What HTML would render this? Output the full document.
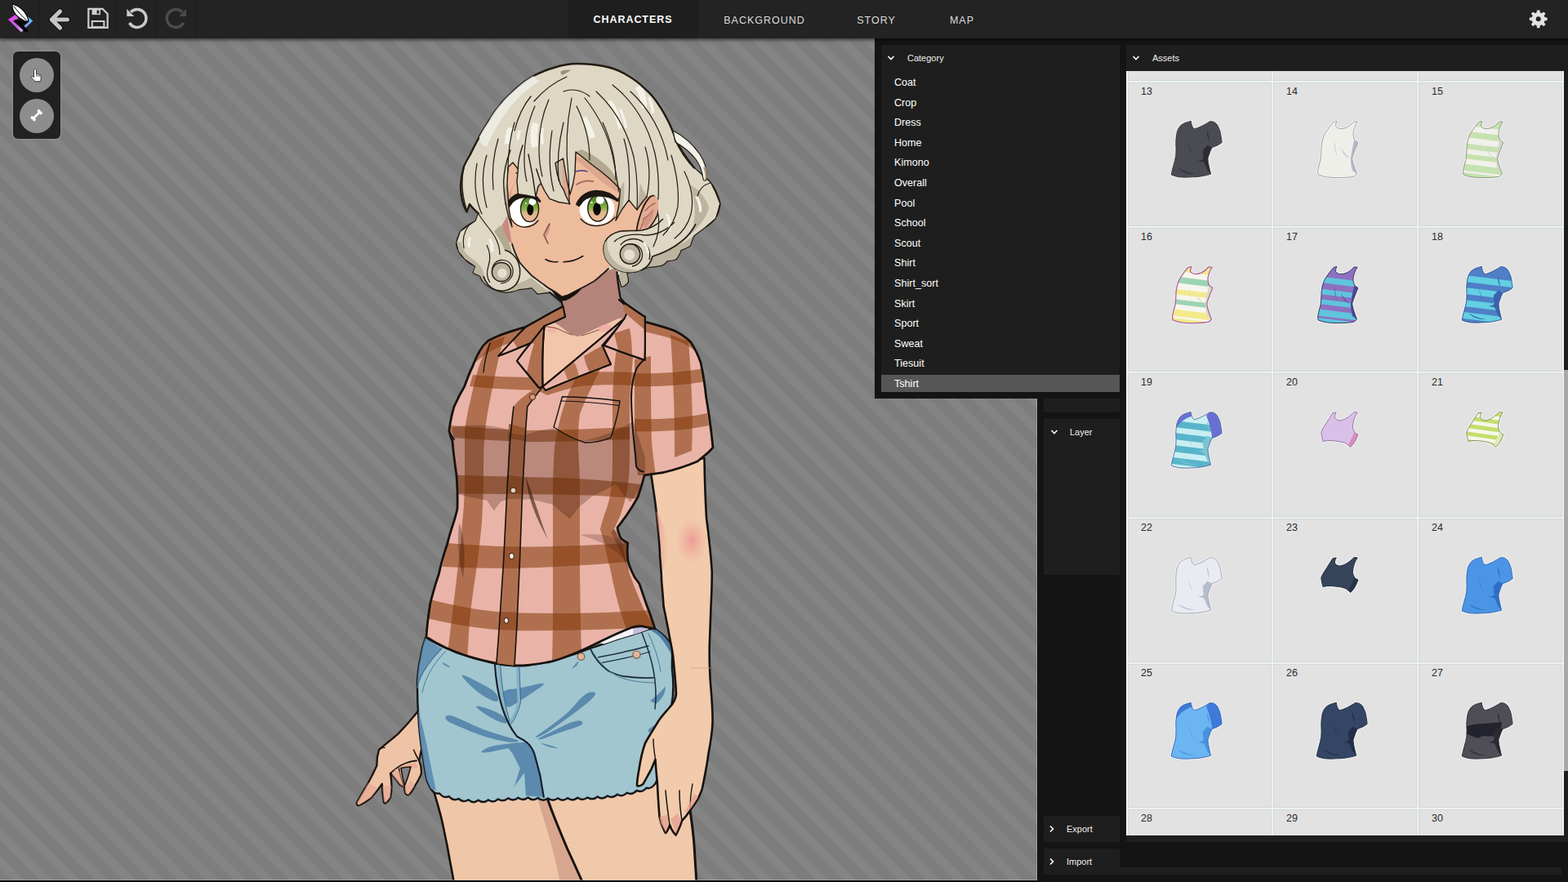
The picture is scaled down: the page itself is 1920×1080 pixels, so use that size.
<!DOCTYPE html>
<html lang="en">
<head>
<meta charset="utf-8">
<title>Character Editor</title>
<style>
*{box-sizing:border-box;margin:0;padding:0}
html,body{width:1920px;height:1080px;overflow:hidden;background:#141414;font-family:"Liberation Sans",sans-serif;color:#fff}
.abs{position:absolute}
#canvas{position:absolute;left:0;top:0;width:1270px;height:1080px;overflow:hidden;
 background:#828282 repeating-linear-gradient(45deg,#7d7d7d 0,#7d7d7d 11px,#848484 13px,#848484 22px,#7d7d7d 24px);}
#topbar{position:absolute;left:0;top:0;width:1920px;height:47px;background:#232323;box-shadow:0 2px 4px rgba(0,0,0,.55);z-index:20}
.tbtn{position:absolute;top:0;height:46px;width:48px;border-right:1px solid #1d1d1d}
.tab{position:absolute;top:0;height:47px;line-height:50.5px;text-align:center;font-size:12.5px;letter-spacing:1px;color:#dcdcdc;white-space:nowrap}
.tab.on{background:#1e1e1e;font-weight:bold;color:#fff;line-height:48px;letter-spacing:.95px}
#side{position:absolute;left:1270px;top:47px;width:650px;height:1033px;background:#141414}
.panel{position:absolute;background:#1e1e1e}
.ph{position:absolute;left:0;top:0;height:32px;line-height:32px;font-size:11px;color:#eee;white-space:nowrap}
.ph svg{position:absolute;top:11px}
.ph span{position:absolute;top:0}
#catwrap{position:absolute;left:1071px;top:47px;width:308px;height:441px;background:#141414;z-index:5}
.row{position:absolute;left:0;width:292px;height:21px;line-height:22.8px;font-size:12.6px;color:#fff;padding-left:16px;white-space:nowrap}
.row.sel{background:#565656}
#grid{position:absolute;left:1379px;top:87px;width:536px;height:936px;background:#eef1f1;overflow:hidden}
.cell{position:absolute;width:176px;height:176px;background:#e2e2e2;border:1px solid #d3d8d8}
.cell b{position:absolute;left:15px;top:2px;font-weight:normal;font-size:12.5px;color:#2a2a2a;line-height:16px}
.cell svg{position:absolute;left:0;top:0}
</style>
</head>
<body>
<div id="canvas">
<!--CHAR-START-->
<svg class="abs" style="left:0;top:0" width="1270" height="1080" viewBox="0 0 1270 1080">
<!-- back hair silhouette (behind everything) -->
<path id="hairsil" d="M707 78 C718 78 729 79 739 81 C749 83 758 86 766 91 C775 96 782 101 789 108 C796 114 802 121 807 129 C812 136 816 144 820 152 C823 159 826 166 828 172 C831 178 834 183 837 188 C841 194 846 200 852 208 C858 213 865 218 870 224 C875 230 879 240 881.5 249 C881 256 879 262 876 267 C872 272 867 276 862 279 C858 282 854 285 850 288 C847 293 846 298 844.8 301 C841 303 837 305 833.7 306 C832 311 830 314 828 317 C824 319 820 319 817 319 C815 322 812 324 809.6 324.8 C805 326 800 326.5 794.8 326.7 C791 328 787 329 783.7 330 C778 332 772 333 767 334 C768 338 769 342 768.9 345 C767 348 764 350 761.5 350.7 C760 346 758.5 342 757.8 337.8 L745 335 L690 372 L673 357.8 C668 358 663 359 658.5 359.6 C656 357 653 354 651 352 C646 353 641 353.5 636 354 C631 356 625 357.5 619.6 357.8 C614 357 609 356 604.8 354 C601 352 597 350 593.7 346.7 C591 344 589 341 588 337.4 C585 336.5 582 335 579.8 333.7 C581 331 582 328.5 582.6 326 C578 324 573 321 569.6 317 C566 314 563.5 311 562 307.8 C560 304 559 300 559.4 296.7 C560 292 562 288 564 283.7 C569 278 576 274 582.6 270.7 C584 267.5 585 264.5 586 261.5 C582 258 578 254.5 575 250 L571.5 259.6 C569 255 567 250 566 245 C564.5 239 564 232 564 226 C564.5 218 566 211 568 204 C570 199 573 194 576 189 C579 182 583 175 586.7 168 C590 161 595 154 599 147.5 C603 140 608 133 613.8 126.7 C619 120 626 114 632.5 108 C639 102 646 97 653 93 C661 89 669 85.5 678 83 C687 80 697 78 707 78 Z" fill="#ded7c4" stroke="#221c14" stroke-width="2.4" stroke-linejoin="round"/>
<!-- lower-back hair darker tufts -->
<path d="M757.8 337.8 C758.5 342 760 346 761.5 350.7 C764 350 767 348 768.9 345 C769 342 768 338 767 334 C772 333 778 332 783.7 330 C787 329 791 328 794.8 326.7 C800 326.5 805 326 809.6 324.8 C812 324 815 322 817 319 C820 319 824 319 828 317 C830 314 832 311 833.7 306 C837 305 841 303 844.8 301 C846 298 847 293 850 288 C840 296 828 302 815 306 C800 311 785 316 770 322 C764 326 760 332 757.8 337.8 Z" fill="#bcb49e"/>
<path d="M604.8 354 C609 356 614 357 619.6 357.8 C625 357.5 631 356 636 354 C641 353.5 646 353 651 352 C653 354 656 357 658.5 359.6 C663 359 668 358 673 357.8 C665 352 657 346 650 340 C640 346 625 351 604.8 354 Z" fill="#bcb49e"/>

<!-- ===== left hand (behind shorts) ===== -->
<g stroke="#1a1410" stroke-width="2.3" stroke-linejoin="round" stroke-linecap="round">
<path d="M514 868 C505 880 496 890 487.2 898.9 C479 906 471 912 463.9 918.3 C462 925 461.3 931 461.3 937.7 C458 945 454.5 952 450.9 958.5 C446 967 441 975 436.7 983.1 C437 985.5 438 986.5 439.3 986.3 C445 984 450 980.5 454.8 976.6 C459.5 971 464 965.5 467.8 959.8 C468 967 468.6 974 469.7 980.5 C470 983 470.8 984 471.6 983.8 C474.5 982 476.5 979.5 478.1 976.6 C479.3 971 479.6 965.5 479.4 959.8 C479.2 955 478.7 951 478.1 946.8 C482 951 486 956 489.8 961 L495 963.7 C495.3 966.5 495.8 969 496.3 971.4 C497.5 973 499 973.6 500.2 973.4 C503.5 970.5 506 966.5 507.9 962.4 C511 958 513.5 953 515.7 948.1 C516.5 942 515.5 936.5 513.1 931.3 L520 900 L520 868 Z" fill="#efc4a6"/>
<path d="M478.1 946.8 C484 941 491 936.5 498 934 C502.5 932.5 506.5 931.5 510 931.5" fill="none" stroke-width="1.8"/>
<path d="M506.6 918.3 C508.5 923 510.5 927 513.1 931.3" fill="none" stroke-width="1.6"/>
<path d="M495 963.7 C492 956 489.5 949 488.5 941" fill="none" stroke-width="1.6"/>
<path d="M463.9 918.3 C466 916 468.5 915 471 915.5" fill="none" stroke-width="1.4"/>
</g>
<path d="M450.9 958.5 L436.7 983.1 L439.3 986.3 L454.8 976.6 L463 965 Z M468.3 963 L469.7 980.5 L471.6 983.8 L478.1 976.6 L479.3 962 Z M480 949 L489.8 961 L495 963.7 L490 945 L484 941 Z M495.5 965 L496.3 971.4 L500.2 973.4 L507.9 962.4 L503 955 Z" fill="#e3a090" opacity=".55"/>
<path d="M489 940 C495 937 502 934.5 509 934 L512 940 C505 940 497 942 491 946 Z" fill="#e3a090" opacity=".6"/>
<path d="M491 940.5 C495 939.5 499 939 503 939 C501 947 498.5 955 495.6 962 C493.5 955 492 948 491 940.5 Z" fill="#808080" stroke="#1a1410" stroke-width="1.6" stroke-linejoin="round"/>

<!-- ===== legs ===== -->
<g stroke="#17120e" stroke-linejoin="round">
<path d="M530 965 C533 975 537 988 540 1000 C543 1012 545 1024 547.5 1035 C550 1050 553 1064 556 1082 L720 1082 L668 972 Z" fill="#efc6a8" stroke-width="2.6"/>
<path d="M657 974 L671 976 C675 988 679 1000 683 1010 C687 1021 691 1031 695 1040 C701 1053 707 1066 714 1082 L686 1082 C682 1060 677 1040 671 1020 C666 1003 661 988 657 974 Z" fill="#d8a68f" stroke="none"/>
<path d="M669 974 C673 986 678 999 682.5 1010 C687 1021 691 1031 695 1040 C701 1053 707 1066 714 1082 L853 1082 C852 1066 851 1050 850 1035 C849 1020 847 1006 845 992 L840 955 Z" fill="#f0c8aa" stroke-width="3"/>
</g>

<!-- ===== shorts ===== -->
<g stroke="#16181c" stroke-linejoin="round" stroke-linecap="round">
<path d="M521 781 C518 789 516 797 515 805 C512 817 511 829 511 840 C511 853 511.5 867 512.5 880 C513 892 514.5 904 516 915 C518 929 520 942 522.5 955 C524 959 526 963 527.5 966 Q532.8 973.2 538.1 971.4 Q543.8 978.2 549.7 975.1 Q555.6 981.5 561.5 978.0 Q567.5 983.5 573.6 979.3 Q579.7 984.7 585.7 979.8 Q591.8 984.4 597.9 979.5 Q604.0 983.8 610.1 978.4 Q616.1 982.6 622.2 977.3 Q628.3 981.9 634.4 976.8 Q640.4 981.3 646.5 976.5 Q652.6 981.6 658.7 977.0 Q664.8 982.1 670.9 977.4 Q677.0 982.2 683.1 977.4 Q689.2 982.2 695.2 977.2 Q701.3 981.8 707.4 976.8 Q713.5 981.4 719.6 976.4 Q725.7 980.7 731.7 975.5 Q737.8 979.8 743.9 974.5 Q749.9 978.4 755.9 972.7 Q761.9 976.5 768.0 970.7 Q773.9 974.2 779.8 967.9 Q785.7 971.3 791.5 964.7 Q797.0 966.8 802.5 959.4 L812 940 C818 915 821 890 822 865 C825 850 825 835 823 820 C822.5 808 824 798 822 790 C818 782 810 775 802 770 L794 770.5 C784 774.5 774 777.5 763 780.7 C755 783 747 786 739 788.6 C733 790.5 727 792.5 720.7 794.6 C700 803 672 811 645 815 C628 816 612 814 600 811 C575 806 548 796 521 781 Z" fill="#a1c6cf" stroke-width="2.4"/>
</g>
<!-- shorts shading -->
<g fill="#5b8aae">
<path d="M568.2 831.2 Q561.1 822.9 573.4 829.0 Q585.8 835.2 597.2 841.4 Q608.6 847.5 609.9 854.5 Q611.3 861.6 602.0 857.6 Q592.8 853.7 584.0 846.6 Q575.2 839.6 568.2 831.2 Z"/>
<path d="M615.4 857.2 Q612.5 844.9 623.8 844.0 Q635.0 843.1 653.5 838.7 Q672.0 834.3 663.2 840.5 Q654.4 846.6 645.1 852.8 Q635.9 858.9 627.1 864.2 Q618.3 869.5 615.4 857.2 Z"/>
<path d="M589.7 871.3 Q577.8 862.5 588.0 865.1 Q598.1 867.7 607.7 872.1 Q617.4 876.5 620.1 882.3 Q622.7 888.0 612.1 884.0 Q601.6 880.1 589.7 871.3 Z"/>
<path d="M545.7 880.2 Q544.4 877.4 547.5 876.1 Q550.6 874.8 558.5 878.3 Q566.4 881.8 579.6 888.0 Q592.8 894.1 608.6 898.8 Q624.5 903.5 631.5 905.6 Q638.5 907.7 631.5 908.6 Q624.5 909.4 608.6 905.9 Q592.8 902.4 577.8 896.3 Q562.9 890.1 555.0 886.6 Q547.0 883.1 545.7 880.2 Z"/>
<path d="M592.3 921.6 Q586.6 921.4 592.3 917.9 Q598.1 914.4 608.6 912.6 Q619.2 910.9 632.4 909.5 Q645.6 908.2 647.5 910.4 Q649.4 912.6 634.3 914.6 Q619.2 916.5 608.6 919.1 Q598.1 921.8 592.3 921.6 Z"/>
<path d="M657.0 902.9 Q652.6 903.8 663.2 896.8 Q673.7 889.7 686.0 880.1 Q698.4 870.4 705.4 861.6 Q712.4 852.8 717.7 849.7 Q723.0 846.6 727.0 847.5 Q730.9 848.4 727.8 852.3 Q724.8 856.3 716.0 863.3 Q707.2 870.4 694.0 880.1 Q680.8 889.7 671.1 895.9 Q661.4 902.1 657.0 902.9 Z"/>
<path d="M659.7 905.6 Q656.1 905.6 666.7 900.3 Q677.3 895.0 687.8 889.7 Q698.4 884.5 704.5 883.1 Q710.7 881.8 712.9 884.0 Q715.1 886.2 710.2 888.4 Q705.4 890.6 693.1 894.6 Q680.8 898.5 672.0 902.1 Q663.2 905.6 659.7 905.6 Z"/>
<path d="M665.8 912.0 Q659.7 908.7 666.7 910.7 Q673.7 912.6 679.9 914.8 Q686.0 917.0 679.0 916.1 Q672.0 915.3 665.8 912.0 Z"/>
<path d="M703.2 817.2 Q699.2 819.4 701.9 816.3 Q704.5 813.2 706.7 811.0 Q708.9 808.8 708.0 811.9 Q707.2 815.0 703.2 817.2 Z"/>
<path d="M542.6 813.2 Q540.0 810.6 543.5 811.9 Q547.0 813.2 549.7 815.4 Q552.3 817.6 548.8 816.7 Q545.3 815.8 542.6 813.2 Z"/>
<path d="M619.2 912.6 L649.1 910.9 L654.4 923.2 L661.4 949.6 L665.8 976.0 L643.8 974.2 L642.1 946.0 L635.9 954.8 L629.7 963.6 L636.8 940.8 L628.0 923.2 Z"/>
<path d="M521 781 C518 789 516 797 515 805 C512 817 511 829 511 840 C513 832 517 824 522 817 C528 808 534 801 541 794 C534 790 527 786 521 781 Z" opacity=".85"/>
<path d="M512.5 880 C513 892 514.5 904 516 915 C518 929 520 942 522.5 955 L527.5 966 L534 968 C530 950 526 930 522 910 C519 895 516 884 512.5 870 Z" opacity=".9"/>
<path d="M796 858 C803 853 810 847 815 840 C815 848 811 856 803 862 Z"/>
<path d="M794 893 C802 888 810 882 816 876 L814 886 C808 891 801 895 794 897 Z"/>
</g>
<g fill="none" stroke-linecap="round" stroke-linejoin="round">
<path d="M610.7 815.8 Q612.5 852.8 622.7 882.7" stroke="#86b2c6" stroke-width="3.6"/>
<path d="M633.6 814.1 L635.4 859.8 Q631.5 875.7 624.8 884.8" stroke="#86b2c6" stroke-width="3.6"/>
<path d="M612.9 815.8 Q614.7 852.8 624.2 883.7" stroke="#3d6a8c" stroke-width="1"/>
<path d="M635.8 814.1 L637.6 859.8 Q633.5 876.7 625.8 886.3" stroke="#3d6a8c" stroke-width="1"/>
<path d="M606.0 814.1 C608.6 852.8 617.4 882.7 633.3 902.1 C641.0 906.0 649.1 909.1 654.4 923.2 L661.4 949.6 L665.8 976.0" stroke="#16202c" stroke-width="2.2"/>
</g>
<g fill="none" stroke="#1b2a3c" stroke-width="1.3" stroke-linecap="round">
<path d="M541 794 C534 801 528 808 522 817 C517 824 513 832 511 842" stroke="#4d7798"/>
<path d="M546 797 C539 804 533 812 528 820 C523 828 519 838 517 848" stroke="#4d7798" stroke-width="1"/>
<path d="M723.5 795.6 C728 806 736 815 744.8 821.5 C752 825 758 827 763 828 C776 830 788 830.5 800 829.8" stroke="#1d2d3d" stroke-width="1.8"/><path d="M727 800 C734 812 745 822 758 829 C772 834 786 836 801 836" stroke="#4d7798" stroke-width="1"/>
<path d="M732.8 804.8 C753 801 774 796.5 793.9 791" stroke="#1d2d3d" stroke-width="1.5"/>
<path d="M737.4 811.3 C756 808 776 804 796 798" stroke="#1d2d3d" stroke-width="1.3"/>
<path d="M786 775 C792 790 797 805 800 820 C803 836 804 852 802 868" stroke="#1d2d3d" stroke-width="1.5"/>
<path d="M794 776 C801 790 806 806 809 822" stroke="#4d7798" stroke-width="1"/>
</g>
<!-- rivets & underwear -->
<path d="M739 788.6 C747 786 755 783 763 780.7 C774 777.5 784 774.5 794 770.5 L790 760 L770 764 L745 776 L728 786 Z" fill="#f4f4f6"/><path d="M775 777 C781 775.5 787 773.5 794 770.5 L790 762 L776 766 Z" fill="#c6bedc"/><path d="M802 770.5 C810 775 817 782 821 790 C822 794 822.5 798 822 802 C819 795 814 787 808 780 C804 776 800 773.5 796 771.5 Z" fill="#4f7ba0"/>
<circle cx="711.5" cy="804" r="4.3" fill="#dfb79a" stroke="#7a5a48" stroke-width="1.2"/>
<circle cx="779.5" cy="801.6" r="4.6" fill="#dfb79a" stroke="#7a5a48" stroke-width="1.2"/>

<!-- ===== right arm & hand ===== -->
<g stroke="#17120e" stroke-linejoin="round" stroke-linecap="round">
<path d="M796 572 C798 585 800 600 802 613 C804 628 805 640 806 650 C807 662 808 670 808 680 C809 692 810 700 810 710 C811 722 812 732 812.5 742 C814.5 752 816.5 762 818.5 772 C820 782 822.5 792 824 802 C825.5 818 827.5 835 828 850 C827 857 824 862 820 866 C815 872 809 878 805 885 C800 893 795 901 790 910 C786 921 784 932 782.5 942 C781 950 780 956 780 962 C782 963 785 962 787.5 960 C791 954 794 948 797.5 942 L802.5 930 C803 940 804 950 805 960 C805.5 973 806.5 987 807.5 1000 C809 1008 812 1015 815 1020 C817 1018 819 1014 820 1010 C822 1016 825 1020 827.5 1022.5 C830 1018 833 1012 835 1005 C838 1002 842 997 845 992.5 C848 988 852 983 855 977.5 C857 973 859 969 860 965 C863 950 866 936 867.5 922.5 C870 910 872 897 872.5 885 C873 870 871 850 869.5 830 L869 817 C868.6 806 868.6 798 868.8 789 C869.2 775 870 760 870.5 744 C871.2 730 871.8 715 871.8 700 C870.5 680 868 657 865 634 C863.6 610 862.8 585 862.5 561 Z" fill="#f1cbab" stroke-width="2.6"/>
<path d="M820 1010 C818 996 816 982 815 968" fill="none" stroke-width="1.5"/>
<path d="M835 1005 C833 992 832 980 832 968" fill="none" stroke-width="1.5"/>
<path d="M845 992 C845 980 846 970 848 960" fill="none" stroke-width="1.3"/>
<path d="M802.5 930 C801 920 800 912 800 905" fill="none" stroke-width="1.4"/>
</g>
<!-- arm shading -->
<defs>
<radialGradient id="blush1" cx=".5" cy=".5" r=".5"><stop offset="0" stop-color="#ee8088" stop-opacity=".62"/><stop offset="1" stop-color="#ee8f92" stop-opacity="0"/></radialGradient>
<linearGradient id="blush2" x1="0" y1="0" x2="1" y2="0"><stop offset="0" stop-color="#ea8c8c" stop-opacity=".6"/><stop offset="1" stop-color="#ea8c8c" stop-opacity="0"/></linearGradient>
<linearGradient id="armg" x1="0" y1="0" x2="1" y2="0"><stop offset="0" stop-color="#f6d9bd" stop-opacity=".55"/><stop offset=".5" stop-color="#f6d9bd" stop-opacity="0"/></linearGradient>
</defs>
<path d="M800 590 C802 604 803 616 804.5 630 C806 644 807 656 808 668 C809 682 810 696 811 710 C812 722 812.5 732 813 742 L830 742 L826 590 Z" fill="url(#blush2)" opacity=".0"/>
<path d="M803 625 C805 640 807 654 808.5 668 C809.5 680 810 690 810.5 700 C816 690 819 676 817 662 C815 648 810 636 803 625 Z" fill="url(#blush2)"/>
<ellipse cx="847" cy="662" rx="19" ry="28" fill="url(#blush1)"/>
<path d="M807.5 1000 L809 1008 L815 1019 L819 1010 L817 998 Z M821 1003 L827.5 1021 L834 1005 L830 996 Z M838 996 L846 990 L855 976 L850 972 Z" fill="#e59e90" opacity=".75"/>
<path d="M870 817 L846 817 L846 818.5 L870 818.5 Z" fill="#c9a08a" opacity=".5"/>

<!-- ===== shirt ===== -->
<defs>
<clipPath id="shirtclip"><path id="shirtpath" d="M689.6 375.4 C680 380 671 385 662.5 390 C656 394 650 397 643.8 400.4 C634 403 625 406 616.7 408.8 C610 411 604 414 598 417 C593 421 590 425 587.5 429.6 C584 436 581 442 579 448 C575 456 572 464 568.8 473 C564 481 560 489 556 498 C553 508 551 518 550 527.5 C551 532 552 536 554 540 C555 554 557 568 559 581.7 C560 596 560.5 610 560 623 C559 628 557.5 633 556 638 C553 647 550 656 548 665 C544 677 540 690 537.5 702.5 C533 715 530 727 527 738 C525 750 523 765 522 780 C536 789 552 797 570 802.5 C584 807 597 810 610 812.5 L630 815 C644 815 657 813.5 670 811 C677 810 689 806 700 801.5 C712 797 722 792 731 787.5 C745 780.5 759 774 772.6 768.7 C778 767 783 766.5 786.5 766.9 L802 770 C799 760 795.5 750 791.5 740 C788.5 731 785 721 783 715 C781 712 779 709.5 777 706.7 C773 699 770 692 768.8 685.8 C768 678 768 671 768.8 665 C765 663 762 661 760 658.8 C758 654 756.5 650 756 646 C760 641 763.5 636 766.7 631.7 C772 624 777 616 781 608.8 C784 600 787 591 789 582 C797 580.5 805 579.5 812.5 578.5 C827 575 841 570.5 854 565 C859 561 864 557 868.8 552.5 L873 548 C871 527 868 506 864.6 485.8 C863 471 861 457 858 444 C855 435 851 427 845.8 419 C840 413 833 408.5 825 404.6 C813 400 801 397 789.6 394 L789.6 388 C783 384 777 379.5 770.8 375.4 C766 372 762 369.5 758 367 C740 372 715 376 689.6 375.4 Z"/></clipPath>
</defs>
<path d="M689.6 375.4 C680 380 671 385 662.5 390 C656 394 650 397 643.8 400.4 C634 403 625 406 616.7 408.8 C610 411 604 414 598 417 C593 421 590 425 587.5 429.6 C584 436 581 442 579 448 C575 456 572 464 568.8 473 C564 481 560 489 556 498 C553 508 551 518 550 527.5 C551 532 552 536 554 540 C555 554 557 568 559 581.7 C560 596 560.5 610 560 623 C559 628 557.5 633 556 638 C553 647 550 656 548 665 C544 677 540 690 537.5 702.5 C533 715 530 727 527 738 C525 750 523 765 522 780 C536 789 552 797 570 802.5 C584 807 597 810 610 812.5 L630 815 C644 815 657 813.5 670 811 C677 810 689 806 700 801.5 C712 797 722 792 731 787.5 C745 780.5 759 774 772.6 768.7 C778 767 783 766.5 786.5 766.9 L802 770 C799 760 795.5 750 791.5 740 C788.5 731 785 721 783 715 C781 712 779 709.5 777 706.7 C773 699 770 692 768.8 685.8 C768 678 768 671 768.8 665 C765 663 762 661 760 658.8 C758 654 756.5 650 756 646 C760 641 763.5 636 766.7 631.7 C772 624 777 616 781 608.8 C784 600 787 591 789 582 C797 580.5 805 579.5 812.5 578.5 C827 575 841 570.5 854 565 C859 561 864 557 868.8 552.5 L873 548 C871 527 868 506 864.6 485.8 C863 471 861 457 858 444 C855 435 851 427 845.8 419 C840 413 833 408.5 825 404.6 C813 400 801 397 789.6 394 L789.6 388 C783 384 777 379.5 770.8 375.4 C766 372 762 369.5 758 367 C740 372 715 376 689.6 375.4 Z" fill="#e9b4a7"/>
<g clip-path="url(#shirtclip)">
<g fill="#813809" fill-opacity=".55">
<!-- vertical bands -->
<path d="M600 418 L618 412 C612 430 608 450 604 470 C600 490 596 508 594 527 C592 545 592 565 592 585 C592 605 591 622 590 640 C588 660 586 680 583 700 C580 720 577 740 575 760 L572 810 L548 800 L553 760 C555 740 558 720 560 700 C563 680 565 660 566 640 C568 622 569 605 569 585 L569 527 C571 512 574 498 577 486 C580 472 583 460 586 450 C590 438 595 427 600 418 Z"/>
<path d="M719 436 L741 440 C735 452 730 462 725 473 C719 485 714 496 710 507 C708 520 708 534 708 548 C709 566 710 583 710 600 L710 700 L711 765 L712 805 L676 814 L677 765 L677 600 C677 582 678 565 679 548 C681 533 684 520 687.5 507 C691 495 695 484 700 473 C706 460 712 448 719 436 Z"/>
<path d="M760 398 L779 404 C777 420 775 435 774 450 C772 467 771 484 771 500 L771 560 C771 575 770 588 768 600 C766 611 763 621 760 630 L752 648 C755 654 758 660 762 665 C764 677 767 689 770 700 C776 717 783 734 790 750 L804 770 L772 784 C768 773 764 762 760 750 C755 733 751 716 748 700 C745 688 742 676 740 665 L735 648 C737 640 739 632 742 625 C745 617 747 608 748 600 C750 587 750 574 750 560 L750 500 C750 483 751 466 752 450 C754 432 757 414 760 398 Z"/>
<!-- horizontal bands torso -->
<path d="M579 459 C600 461 630 462 655 462 L664 473 L673 469 C690 463 700 459 708 457 C730 455 755 455 777 456 L777 472 C755 471 732 471 708 473 C695 476 682 480 670 484 L658 478 C630 477 600 476 575 473 Z"/>
<path d="M551 521 C580 523 615 526 646 527 C690 527 730 525 771 523 L771 538 C730 540 690 541 646 541 C615 540 583 538 556 536 Z"/>
<path d="M559 581.7 C600 583 640 584 680 585 C715 586 750 589 785 593 L780 611 C748 607 715 606 680 605.5 C640 605 600 605 560 604.6 Z"/>
<path d="M548 665 C575 667 600 669 625 669.5 C670 670 720 668 769 665 L769.5 688 C720 692 670 695 625 696 C597 696 568 695 541.5 694 Z"/>
<path d="M527 734 C556 742 590 748 620 750 C680 752 740 751 797 747 L803 768 C745 771 680 773 620 772 C588 770 555 765 523 757 Z"/>
<!-- shoulders -->
<path d="M689 375 L662 390 L643.8 400.4 L617 409 L598 417 L588 429 L580 446 C592 434 606 426 622 421 C636 416 650 410 662 402 C672 394 682 385 692 378 Z"/>
<path d="M789.6 388 L789.6 394 L825 404.6 L845.8 419 L852 430 C842 422 830 417 817 413 C807 410 797 408 789.6 406 Z"/>
<!-- sleeve bands -->
<path d="M821 410 L843 418 C845 440 846 462 847 484 C848 506 848 528 847 552 L826 560 C826 536 826 512 825 488 C824 462 823 436 821 410 Z"/>
<path d="M777 440 L797 436 C797 470 797 505 798 540 C799 555 801 568 803 582 L781 582 C779 568 778 554 777 540 Z"/>
<path d="M777 457 C805 458 835 456 862 451 L864.5 467 C836 472 806 474 777 473 Z"/>
<path d="M777 513 C808 514 838 512 866 506 L868 521 C840 527 808 529 777 528 Z"/>
</g>

</g>
<path d="M689.6 375.4 C680 380 671 385 662.5 390 C656 394 650 397 643.8 400.4 C634 403 625 406 616.7 408.8 C610 411 604 414 598 417 C593 421 590 425 587.5 429.6 C584 436 581 442 579 448 C575 456 572 464 568.8 473 C564 481 560 489 556 498 C553 508 551 518 550 527.5 C551 532 552 536 554 540 C555 554 557 568 559 581.7 C560 596 560.5 610 560 623 C559 628 557.5 633 556 638 C553 647 550 656 548 665 C544 677 540 690 537.5 702.5 C533 715 530 727 527 738 C525 750 523 765 522 780 C536 789 552 797 570 802.5 C584 807 597 810 610 812.5 L630 815 C644 815 657 813.5 670 811 C677 810 689 806 700 801.5 C712 797 722 792 731 787.5 C745 780.5 759 774 772.6 768.7 C778 767 783 766.5 786.5 766.9 L802 770 C799 760 795.5 750 791.5 740 C788.5 731 785 721 783 715 C781 712 779 709.5 777 706.7 C773 699 770 692 768.8 685.8 C768 678 768 671 768.8 665 C765 663 762 661 760 658.8 C758 654 756.5 650 756 646 C760 641 763.5 636 766.7 631.7 C772 624 777 616 781 608.8 C784 600 787 591 789 582 C797 580.5 805 579.5 812.5 578.5 C827 575 841 570.5 854 565 C859 561 864 557 868.8 552.5 L873 548 C871 527 868 506 864.6 485.8 C863 471 861 457 858 444 C855 435 851 427 845.8 419 C840 413 833 408.5 825 404.6 C813 400 801 397 789.6 394 L789.6 388 C783 384 777 379.5 770.8 375.4 C766 372 762 369.5 758 367 C740 372 715 376 689.6 375.4 Z" fill="none" stroke="#17120e" stroke-width="2.8" stroke-linejoin="round"/>

<!-- shirt shading & details (inside clip) -->
<g clip-path="url(#shirtclip)">
<path d="M548 530 L555.6 523 C570 520 584 520 596 521 C606 522 616 524 624 526.4 L645 531.7 C656 528 667 526 677 524.7 C690 530 701 536 712 540.5 C724 538 736 534 747 530 C757 526 767 521 775.5 516 L790 560 L790 585 C785 596 779 606 772 615 C767 610 760 602 754 593 C745 598 735 603 726 607 C720 612 714 617 708.6 621 C705 626 701 631 698 635.5 C691 630 684 624 677 618 C668 615 658 613 649 611 L640 612 L624 611 C620 612 617 613 613.7 614 C610 618 607 622 605 625.6 C602 621 599 617 596 612.6 C587 611 577 609 568 607 L555 604 Z" fill="#3a1608" opacity=".27"/>
<path d="M562.5 640 C560 655 561 672 563 688 C564 697 566 703 567 708 C569 694 569 680 568 666 C567 656 565 648 562.5 640 Z" fill="#3a1608" opacity=".35"/>
<path d="M643.8 583.8 C650 600 656 618 662 636 C665 645 668 653 671 661 C664 648 657 634 652 620 C648 608 645 596 643.8 583.8 Z" fill="#2a1006" opacity=".55"/>
<path d="M710 655 C730 652 750 656 768 665 L769 690 C755 672 735 662 710 655 Z" fill="#3a1608" opacity=".22"/>
<path d="M752 648 C760 654 766 660 769 668 L770 700 C764 684 757 668 748 652 Z" fill="#3a1608" opacity=".3"/>
<!-- placket -->
<path d="M660 473 L664.6 473.3 C658 482 651 490 645.8 498 C644 520 642.5 543 641.7 565 L639.6 602.5 L636.5 685.8 L633 765 L630 818 L607 815 L611.5 765 L616.7 685.8 L620.8 602.5 L623 565 C624 542 626 520 629 498 C636 488 648 480 660 473 Z" fill="#b07050"/>
<path d="M623 519 L643 524 L642 540 L622 537 Z M620.8 582 L640 584 L639.6 605 L620 604.5 Z M617.5 669 L637 669.5 L636 696 L616.5 696 Z M613 749 L633.5 750 L632.5 772 L611.5 771 Z" fill="#8e4a22" opacity=".75"/>
<path d="M622.5 530 L642.5 533 L639.6 611 L620.8 611 Z" fill="#3a1608" opacity=".25"/>
</g>
<g fill="none" stroke="#17120e" stroke-width="1.6" stroke-linecap="round" stroke-linejoin="round">
<path d="M664.6 473.3 C658 482 651 490 645.8 498 C644 520 642.5 543 641.7 565 L639.6 602.5 L636.5 685.8 L633 765 L630 815"/>
<path d="M629 498 C626 520 624 542 623 565 L620.8 602.5 L616.7 685.8 L611.5 765 L608 812"/>
<!-- pocket -->
<path d="M688.5 485.8 C712 486 736 488 759 491 C757 506 753 521 748 535.8 C738 540 727 542 716.7 542 C703 538 690 531 678 523 C682 510 685 498 688.5 485.8 Z" stroke-width="1.4"/>
<path d="M687 491 C710 491.5 734 493.5 757.5 496.5" stroke-width="1.2"/>
<!-- armhole seam / sleeve -->
<path d="M787 442 C783 446 780 449 779 452.5 C775 463 773 474 773 486 C773 500 774 514 775 527.5 C776 538 777 548 778 556.7 L779 571 C781 575 784 577 787.5 577.5" stroke-width="2"/>
<path d="M600 420 C596 432 593 444 592 456" stroke-width="1.3"/>
<path d="M556 538 C553 534 551 530 550 527.5" stroke-width="2"/>
</g>
<!-- buttons -->
<g stroke="#5a3a24" stroke-width="1.3">
<circle cx="652" cy="486" r="3.6" fill="#d89a72"/>
<circle cx="628.5" cy="600.4" r="3.4" fill="#e4d0bc"/>
<ellipse cx="626.5" cy="681" rx="2.9" ry="3.6" fill="#f6f3f0"/>
<ellipse cx="620" cy="759.8" rx="2.6" ry="3.4" fill="#f6f3f0"/>
</g>

<!-- neck & chest skin -->
<path d="M684 352 L692 388 L666 398 L664.6 473.3 L764.6 390 L770 378 L759.6 364.6 L754 328 Z" fill="#f3c6ab"/>
<path d="M684 352 L692 388 L668 397 C672 396 676 395 680 395.5 C686 399 692 404 698 408.8 C701 410.5 705 411.5 708 412 C715 409 722 406 729 402.5 C738 398.5 748 394.5 757 390 L765 389.5 L770 378 L759.6 364.6 L754 328 Z" fill="#b4847b"/>
<ellipse cx="741" cy="402" rx="9" ry="5" fill="#ec9c9c" opacity=".5"/>
<ellipse cx="676" cy="404" rx="6" ry="4" fill="#ec9c9c" opacity=".35"/>
<g fill="none" stroke="#17120e" stroke-linecap="round" stroke-linejoin="round">
<path d="M686.7 364.6 C688 372 690 380 692 388" stroke-width="2.2"/>
<path d="M755.4 333 C756 344 758 355 759.6 364.6 C763 369 767 373 770 377" stroke-width="2.2"/>
<path d="M667 400 C673 400 679 401 684 403 C690 406 696 409 701 410" stroke-width="1" stroke="#7a4a3c"/>
<path d="M712 411 C720 409 727 406 733 404" stroke-width="1" stroke="#7a4a3c"/>
</g>

<!-- collars & lapels -->
<g stroke="#17120e" stroke-width="2" stroke-linejoin="round">
<!-- left collar -->
<path d="M689.6 375.4 C680 380 671 385 662.5 390 L643.8 400.4 C632 412 621 424 610.4 435.8 C624 431 637 425 650 420 C656 413 661 406 666.7 399 C675 396 684 392 692 388 Z" fill="#b07050"/>
<path d="M628 417 L610.4 435.8 L634 427 Z" fill="#e9b4a7" stroke="none"/>
<!-- left lapel -->
<path d="M666.7 399 C661 406 656 413 650 420 C644 427 638 435 633 442 C642 453 651 464 660 475 L664.6 473.3 C664 448 664 423 666.7 399 Z" fill="#b07050"/>
<path d="M650 420 L633 442 L645 456 C648 444 650 432 654 421 Z" fill="#e9b4a7" stroke="none"/>
<!-- right lapel -->
<path d="M764.6 390 C731 418 698 446 664.6 473.3 L668 478 C695 466 722 456 748 446 C744 438 741 430 737.5 423 C747 412 756 401 764.6 390 Z" fill="#e9b4a7"/>
<path d="M737.5 423 L748 446 L722 456 C718 448 716 442 715 436 Z" fill="#b07050" stroke="none"/>
<path d="M690 452 L702 442 C706 448 708 455 709 462 L696 467 Z" fill="#b07050" stroke="none" opacity=".9"/>
<!-- right collar -->
<path d="M758 367 C762 369.5 766 372 770.8 375.4 C777 379.5 783 384 789.6 388 C790 406 790 424 789.6 441 C772 435 755 429 739.6 423 C748 412 757 401 764.6 390 L770 378 Z" fill="#e9b4a7"/>
<path d="M765 371 L789.6 388 L789.6 404 C780 396 771 388 763 381 Z" fill="#b07050" stroke="none"/>
<path d="M752 408 L771 402 C773 412 774 424 774 435 L757 429 Z" fill="#b07050" stroke="none"/>
</g>
<g fill="none" stroke="#17120e" stroke-width="2" stroke-linejoin="round" stroke-linecap="round">
<path d="M689.6 375.4 C680 380 671 385 662.5 390 L643.8 400.4 C632 412 621 424 610.4 435.8 C624 431 637 425 650 420 C644 427 638 435 633 442 C642 453 651 464 660 475"/>
<path d="M666.7 399 C664 423 664 448 664.6 473.3 C698 446 731 418 764.6 390"/>
<path d="M668 478 C695 466 722 456 748 446 C744 438 741 430 737.5 423 L739.6 423 C755 429 772 435 789.6 441 C790 424 790 406 789.6 388 C783 384 777 379.5 770.8 375.4 C766 372 762 369.5 758 367"/>
</g>

<!-- ===== face ===== -->
<path d="M621 241 L616 200 L640 160 L760 150 L800 200 L808 250 L797 284 L778 300 L760 318 L745 329 C740 334 734 339 728 344 C721 348 714 352 707.5 355 L696 361 L688 363.5 L680.7 358 C675 355 670 352 666 348.5 C661 345 656 341 651 337.4 C646 332 640 326 636 320.7 C632 313 629 306 627 298.5 C625 291 624 284 623 276 Z" fill="#edbc9d"/>
<!-- hair shadow on forehead/face -->
<path d="M621 241 L640 205 L700 190 L780 215 L792 255 L770 245 L757 236 L740 225 L722 210 L706 196 L700 222 L697 246 L686 236 L676 228 L666 222 L655 236 L646 228 L634 216 L627 232 L624 262 Z" fill="#d79f8a" opacity=".75"/>
<!-- ear -->
<path d="M779 290 C779 282 781 272 784 263 C787 254 791 246 796 241 C800 238 805 239 807 244 C808 250 807 257 805 263 C802 270 798 276 793 281 C789 285 784 288 779 290 Z" fill="#e1ab92" stroke="#221c14" stroke-width="1.8"/>
<path d="M788 268 C792 266 796 262 799 258 M790 258 C794 254 798 250 802 249 M784 281 C786 277 788 273 788 268" fill="none" stroke="#a8665a" stroke-width="1.5" stroke-linecap="round"/>
<path d="M786 272 C790 268 796 262 800 255 C802 262 797 272 790 279 Z" fill="#c98a7c" opacity=".7"/>
<!-- chin line & shadow -->
<path d="M627 298.5 C629 306 632 313 636 320.7 C640 326 646 332 651 337.4 C656 341 661 345 666 348.5 C670 352 675 355 680.7 358 L688 363.5 L696 361 L707.5 355 C714 352 721 348 728 344 C734 339 740 334 745 329" fill="none" stroke="#221c14" stroke-width="1.8" stroke-linecap="round"/>
<path d="M674 353 C679 357 684 361 688 363.5 L696 361 C702 358 708 355 713 352 C710 357 704 362 697 366 C693 368.5 689 369 686 368 C681 364 677 359 674 353 Z" fill="#17120e"/>
<g transform="translate(0 -1)"><!-- eyes whites -->
<ellipse cx="642" cy="258.3" rx="17.6" ry="19.6" fill="#fff"/>
<ellipse cx="731" cy="257" rx="21.5" ry="19.6" fill="#fff"/>
<!-- iris -->
<defs>
<linearGradient id="irisg" x1="0" y1="0" x2="0" y2="1"><stop offset="0" stop-color="#3f6f22"/><stop offset=".18" stop-color="#5c9030"/><stop offset=".5" stop-color="#8ab548"/><stop offset=".64" stop-color="#dcb78a"/><stop offset="1" stop-color="#f4b8a4"/></linearGradient>
</defs>
<ellipse cx="648.6" cy="257" rx="11" ry="15.6" fill="url(#irisg)" stroke="#2a2a18" stroke-width="1.5"/>
<ellipse cx="732" cy="256" rx="12.2" ry="16" fill="url(#irisg)" stroke="#2a2a18" stroke-width="1.5"/>
<ellipse cx="649.3" cy="257.7" rx="4" ry="7" fill="#0c0a08"/>
<ellipse cx="731" cy="257" rx="4.8" ry="7.8" fill="#0c0a08"/>
<circle cx="652" cy="248" r="4.4" fill="#fff"/>
<circle cx="734.8" cy="246" r="5" fill="#fff"/>
<circle cx="644" cy="250" r="1.1" fill="#e8f4d0"/>
<circle cx="724.5" cy="249" r="1.2" fill="#e8f4d0"/>
</g>
<!-- lashes -->
<g fill="none" stroke="#1c1612" stroke-linecap="round">
<path d="M621.5 252 C624 244 632 238 642 237.4 C651 237.2 657 241 661 247.5 C656 243.5 650 241.6 643 241.8 C634 242.2 627 246 623.5 253 Z" fill="#241812" stroke-width="2.8" stroke-linejoin="round" transform="translate(0 -1)"/>
<path d="M706.5 251 C711 241 720 235.6 730 235.2 C741 235.2 750 239.5 756.5 246.5 C749 242 741 239.8 731 240 C721 240.4 713 245 709 252.5 Z" fill="#241812" stroke-width="2.8" stroke-linejoin="round" transform="translate(0 -1)"/>
<path d="M755 246 C757 244 759 241 760 238" stroke-width="1.6"/>
<path d="M626 268 C630 275 637 278.5 644 278 C651 277.5 656 274 659 270" stroke-width="1.3"/>
<path d="M711 268 C716 274 724 277 732 276.5 C741 276 748 272 753 266" stroke-width="1.3"/>
<path d="M623 251 L619 249 M624 247 L621 243" stroke-width="1.3"/>
<!-- brows -->
<path d="M705 210 C710 208.5 715 208.5 719 210" stroke="#5a4a8a" stroke-width="1.6"/>
<path d="M632 212 C636 210.5 640 210.5 644 211.5" stroke="#3a3028" stroke-width="1.4"/>
<path d="M706 226 C712 222 720 221 726 222" stroke="#a86a62" stroke-width="2"/>
<!-- nose & mouth -->
<path d="M673 274 C670 279 668 283.5 666 287.5 C667.5 291 669.5 295 671 298" stroke="#7a4a3a" stroke-width="1.5"/>
<path d="M668 317.5 C672 320 677 321.2 683 320.5" stroke-width="1.5"/>
<path d="M690 320.8 C699 320.5 707 318 713.8 313.5" stroke-width="1.5"/>
</g>
<path d="M666 287.5 C669 283 672 278 673.5 274 C674 280 672 286 668.5 290 Z" fill="#c98d78" opacity=".8"/>
<!-- inner ear/shadow at left of face -->
<path d="M604.8 283.7 C608 280 611 277.5 614 276 C617 281 619.5 286 621.5 291 C623.5 297 625 303 627 309.6 C629 313.5 631 317 632.6 320.7 L623 320.7 C618 317 614 313.5 610 309.6 C608 306 606 302 604.8 298.5 Z" fill="#b3a991"/>
<path d="M614.5 276 C617 283 619.5 289 623 296 L627 298.5 L623 276 L621.5 264 Z" fill="#c98a80"/>
<!-- bangs -->
<path d="M612 200 L616 225 L619 240 L621.5 255 L627 278 L623 255 L621 225 L622 205 L628 199 L634.4 207 L633 222 L634.4 237 L645 238.5 L656 241 L659 228 L662.5 224.6 L667 234 L672.9 243.3 L684 247.5 L697.9 249.6 L693 240 L690 232 L686.5 226.7 L682 212 L680 199.6 L689.6 194 L692 208 L694 220 L698 238 L701.5 226 L704 212 L705 186 L714 193 L725 201.7 L736 210 L745.8 218.3 L753 225 L759.4 231.9 L758 250 L754 270 L762 256 L770 245 L780 257 L786 248 L792 241 L800 238 L808 246 L822 200 L780 140 L640 140 Z" fill="#ded7c4"/>
<!-- underside shadow shapes in bangs -->
<path d="M705 186 L714 193 L725 201.7 L736 210 L745.8 218.3 L753 225 L759.4 231.9 C757 222 752 213 745 205 C736 196 724 188 712 183 Z" fill="#b3a98f"/>
<path d="M759.4 231.9 L758 250 L754 270 L762 256 C764 245 765 234 764 222 C762 226 760 229 759.4 231.9 Z" fill="#bcb49e"/>
<path d="M780 257 L786 248 L792 241 C789 236 786 230 784 224 C783 235 782 246 780 257 Z" fill="#bcb49e"/>
<path d="M621 225 L623 255 L627 278 C622 262 619 246 618 232 C618.5 229 619.5 227 621 225 Z" fill="#bcb49e"/>
<path d="M680 199.6 L682 212 L686.5 226.7 L690 232 C689 222 688 212 689.6 194 Z" fill="#c9c2ad" opacity=".9"/>
<g fill="none" stroke="#221c14" stroke-width="1.4" stroke-linejoin="round" stroke-linecap="round">
<path d="M625 184 C620 197 617 210 616.7 222.5 C617 240 619 258 627 278 L623 255 L621 225 L622 205 L628 199 L634.4 207 L633 222 L634.4 237"/>
<path d="M647 189 C651 207 654 225 656 241 L659 228 L662.5 224.6 L667 234 L672.9 243.3 L684 247.5 L697.9 249.6 L693 240 L690 232 L686.5 226.7 L682 212 L680 199.6 L689.6 194 L692 208 L694 220 L698 238 L701.5 226 L704 212 L705 186 L714 193 L725 201.7 L736 210 L745.8 218.3 L753 225 L759.4 231.9 L758 250 L754 270 L762 256 L770 245 L780 257 L786 248 L792 241"/>
<path d="M656.8 207 C659 214 661 220 662.5 224.6"/>
<path d="M640 178 C636 190 634 200 634.4 207"/>
</g>
<!-- right side hair over/around ear & swoop into curl -->
<path d="M806 244 C812 236 816 226 818 214 L850 206 L870 224 L881 249 L876 267 L862 279 L850 288 C838 296 826 301 812 305 C806 290 804 276 806 262 Z" fill="#ded7c4"/>
<path d="M845 226 C856 232 864 242 868 254 C866 262 862 270 856 276 C852 281 848 285 844 288 C850 276 852 262 850 248 C849 240 847 233 845 226 Z" fill="#bcb49e"/>
<!-- right curl -->
<path d="M815 263 C808 272 798 279 786 282 C778 283 768 282 760 283 C751 285 744 289 741 296 C738 303 739 311 742 317 C746 324 752 329 760 332 C768 334 777 334 785 331 C792 328 797 322 799 314 C812 310 824 304 834 296 C842 290 848 282 852 274 Z" fill="#ded7c4"/>
<path d="M812 268 C806 274 797 280 786 282 C778 283 768 282 760 283 C751 285 744 289 741 296 C738 303 739 311 742 317 C746 324 752 329 760 332 C768 334 777 334 785 331 C792 328 797 322 799 314 C812 310 824 304 834 296 C842 290 848 282 852 274" fill="none" stroke="#221c14" stroke-width="1.7" stroke-linejoin="round"/>
<path d="M741 296 C738 303 739 311 742 317 C746 324 752 329 760 332 C768 334 777 334 785 331 C778 331 770 330 763 327 C755 323 749 317 746 310 C744 305 743 300 744 295 Z" fill="#bcb49e"/>
<circle cx="771.5" cy="311" r="12.2" fill="#bcb49e" stroke="#221c14" stroke-width="1.5"/>
<circle cx="770.7" cy="312" r="6.6" fill="#e4dfcf"/>
<path d="M771.5 298.8 C779 298 786 303 786.5 311 C787 318 782 325 774 326" fill="none" stroke="#221c14" stroke-width="1.3"/>
<path d="M760 300 C766 292 778 290 787 296 C794 301 797 309 795 318" fill="none" stroke="#221c14" stroke-width="1.3"/>
<path d="M752 296 C760 288 775 286 790 288 C803 288 816 282 826 272" fill="none" stroke="#221c14" stroke-width="1.3"/>
<!-- left wave + curl -->
<path d="M586 261.5 C590 268 596 274 602 280 C608 287 614 296 618 306 C625 308 632 314 635 322 C638 331 637 341 632 348 C626 355 616 358 607 355 C599 352 594 345 592 338 L588 337.4 L579.8 333.7 L582.6 326 L569.6 317 L562 307.8 L559.4 296.7 L564 283.7 L582.6 270.7 Z" fill="#ded7c4"/>
<path d="M564 296 C566 304 570 311 577 316 C584 321 590 326 592 334 C593 340 596 347 602 352 C596 350 591 345 588 337.4 L579.8 333.7 L582.6 326 L569.6 317 L562 307.8 L559.4 296.7 Z" fill="#bcb49e"/>
<circle cx="614" cy="333" r="11.6" fill="#bcb49e" stroke="#221c14" stroke-width="1.5"/>
<circle cx="615" cy="334.6" r="5.8" fill="#e4dfcf"/>
<path d="M618 306 C625 308 632 314 635 322 C638 331 637 341 632 348 C626 355 616 358 607 355 C599 352 594 345 592 338" fill="none" stroke="#221c14" stroke-width="1.6"/>
<path d="M602.5 331 C603 323 609 318 616 318.5 C624 319 629 326 628 334 C627 341 621 347 613 347" fill="none" stroke="#221c14" stroke-width="1.2"/>
<path d="M596 300 C600 308 601 317 598 326 C596 332 596 340 600 346" fill="none" stroke="#221c14" stroke-width="1.2"/>
<path d="M586 262 C592 272 600 280 606 290 C610 297 612 304 612 312" fill="none" stroke="#221c14" stroke-width="1.2"/>
<path d="M586.7 168 C590 161 595 154 599 147.5 C603 140 608 133 613.8 126.7 C619 120 626 114 632.5 108 C639 102 646 97 653 93 L660 100 C653 104 646 109 640 115 C633 121 627 128 622 135 C616 142 611 150 607 158 C603 165 599 172 596 180 L589 176 Z" fill="#efeee6" opacity=".85"/>
<!-- highlights -->
<g fill="#f4f2e8">
<path d="M787 108 C790 114 792 121 792 129 L789 131 C788 123 786 115 783 109 Z"/>
<path d="M796 118 C799 124 801 131 801 138 L798 139 C797 132 795 125 793 120 Z"/>
<path d="M748 128 C752 136 756 145 758 155 L762 154 C760 144 756 135 752 127 Z"/>
<path d="M758 134 C761 141 764 149 765 157 L768 156 C767 148 764 140 761 133 Z"/>
<path d="M716 147 C719 153 722 160 724 167 L728 166 C726 159 723 152 720 146 Z"/>
<path d="M653 152 C651 160 651 168 653 177 L658 176 C657 168 657 160 659 153 Z"/>
<path d="M662 156 C661 163 661 170 663 177 L666 176 C665 170 665 163 666 157 Z"/>
<path d="M624 158 C622 163 621 168 621 173 L626 172 C626 167 627 162 629 158 Z"/>
<path d="M634 160 C633 164 633 168 633 172 L636 171 C636 167 637 163 638 160 Z"/>
<path d="M854 240 C858 246 860 253 859 260 L856 259 C856 252 854 246 851 241 Z"/>
<path d="M818 262 C822 268 823 276 821 283 L818 282 C819 275 818 268 815 263 Z"/>
<path d="M601 292 C604 297 605 303 604 309 L601 308 C601 302 600 297 598 293 Z"/>
<path d="M574 290 C572 294 572 299 573 303 L576 302 C575 298 576 294 577 291 Z"/>
<path d="M789 296 C793 300 795 305 795 311 L792 310 C792 305 790 300 787 297 Z"/>
</g>
<path d="M824 160 C836 166 848 176 857 189 C863 198 866 208 865.5 219 C864 222 862 222 861 219 C860 210 857 202 852 195 C845 186 836 179 827 174 Z" fill="#f4f2e8" stroke="#221c14" stroke-width="1.2" stroke-linejoin="round"/>
<path d="M861 205 C863 210 864 215 863 220 L865.5 219 C866 214 865.5 209 864 204 Z" fill="#a89a80"/>
<path d="M783 104 C788 112 791 121 792 131 L786 133 C785 124 782 115 778 108 Z" fill="#f4f2e8"/>
<path d="M744 124 C750 134 755 146 757 158 L763 156 C760 144 755 133 749 123 Z" fill="#f4f2e8"/>
<path d="M652 150 C649 160 649 171 651 181 L659 179 C657 170 657 160 660 152 Z" fill="#f4f2e8"/>
<path d="M712 144 C716 152 720 161 722 170 L729 168 C726 159 722 150 718 143 Z" fill="#f4f2e8"/>
<path d="M622 156 C619 163 618 170 618 177 L626 175 C626 168 627 162 630 157 Z" fill="#f4f2e8"/>
<!-- crown mark -->
<path d="M686 88 C690 85.5 695 85 699 86 C696 88 692 90.5 688 92 Z" fill="#9a917c"/>
<!-- strand lines -->
<g fill="none" stroke="#221c14" stroke-width="1.2" stroke-linecap="round">
<path d="M694 94 C680 100 666 110 654 124"/>
<path d="M690 112 C700 108 712 110 722 118"/>
<path d="M650 118 C640 130 634 144 630 160"/>
<path d="M672 122 C664 140 660 160 660 182 C660 196 662 208 664 216"/>
<path d="M655 130 C646 150 642 172 642 196 C642 206 643 214 645 222"/>
<path d="M630 150 C624 170 622 190 622 210"/>
<path d="M610 170 C604 190 602 210 604 232"/>
<path d="M596 190 C590 210 590 232 596 254"/>
<path d="M700 120 C694 150 692 180 696 214 C697 228 697 240 697 250"/>
<path d="M690 150 C684 175 682 200 684 221"/>
<path d="M676 160 C672 185 672 210 678 234"/>
<path d="M706 130 C716 150 722 172 722 196"/>
<path d="M716 120 C732 140 744 164 750 190 C753 205 756 220 757.5 234"/>
<path d="M730 112 C752 132 768 160 776 192 C780 212 781 235 780 257"/>
<path d="M750 104 C776 124 794 154 802 188 C806 206 807 224 806 244"/>
<path d="M772 112 C796 134 812 164 818 196"/>
<path d="M738 150 C748 172 754 196 754 220"/>
<path d="M764 170 C770 190 772 212 770 245"/>
<path d="M790 180 C796 200 796 222 792 241"/>
<path d="M826 170 C832 184 840 196 850 206"/>
<path d="M822 190 C828 210 832 230 830 252 C828 266 822 278 812 288"/>
<path d="M838 210 C846 226 850 244 846 262 C843 274 836 284 826 292"/>

<path d="M870 224 C862 226 856 232 854 240"/>
<path d="M806 262 C808 276 806 290 800 302"/>
<path d="M568 204 C564 222 566 242 572 259" stroke-width="1.6"/>
<path d="M584 200 C580 222 582 244 590 262"/>
<path d="M574 276 C568 284 566 294 568 304"/>
</g>


</svg>
<!--CHAR-END-->
<!-- toolbox -->
<div class="abs" style="left:16px;top:63px;width:58px;height:107px;background:#212121;border-radius:6px;box-shadow:0 0 0 1px rgba(160,160,160,.55)"></div>
<div class="abs" style="left:24px;top:71px;width:42px;height:42px;border-radius:50%;background:#8d8d8d"></div>
<div class="abs" style="left:24px;top:121px;width:42px;height:42px;border-radius:50%;background:#8d8d8d"></div>

<svg class="abs" style="left:16px;top:63px" width="58" height="107" viewBox="16 63 58 107">
<!-- hand pointer -->
<g transform="translate(-1.8 0.6) translate(45 92) scale(.95) translate(-45 -92)"><path d="M43.2 85.2 C43.2 84.2 44 83.6 44.8 83.6 C45.7 83.6 46.4 84.3 46.4 85.2 L46.4 90 C46.8 89.4 48.2 89.4 48.5 90.4 C49 89.8 50.3 90 50.5 91 C51.2 90.6 52.3 91 52.3 92.2 L52.3 96 C52.3 97.6 51.6 98.6 51.3 99.6 L44.6 99.6 C43.8 98.2 42 96.6 40.6 95 C39.6 93.8 40.8 92.4 42 93.2 L43.2 94.2 Z" fill="#fff" stroke="#2b2b2b" stroke-width="1" stroke-linejoin="round"/>
<path d="M46.4 90 L46.4 93.4 M48.5 90.6 L48.5 93.4 M50.5 91.2 L50.5 93.4" stroke="#2b2b2b" stroke-width=".8" fill="none"/></g>
<!-- bone -->
<g transform="translate(-.3 -.3) rotate(-45 45 141.5) translate(45 141.5) scale(.88) translate(-45 -141.5)">
<rect x="38.5" y="140" width="13" height="3" fill="#fff"/>
<circle cx="38.5" cy="139.6" r="2.2" fill="#fff"/><circle cx="38.5" cy="143.4" r="2.2" fill="#fff"/>
<circle cx="51.5" cy="139.6" r="2.2" fill="#fff"/><circle cx="51.5" cy="143.4" r="2.2" fill="#fff"/>
</g>
</svg>

<div class="abs" style="left:0;top:1077px;width:1270px;height:1px;background:rgba(200,200,200,.45)"></div>
<div class="abs" style="left:0;top:1078px;width:1270px;height:2px;background:#0c0c0c"></div>
<div class="abs" style="left:1269px;top:47px;width:1px;height:1031px;background:rgba(190,190,190,.5)"></div>
</div>

<div id="side"></div>

<!-- side panels -->
<div class="panel" style="left:1278px;top:488px;width:93px;height:17px"></div>
<div class="panel" style="left:1278px;top:513px;width:93px;height:191px">
  <div class="ph"><svg style="left:8px" width="10" height="10" viewBox="0 0 10 10"><path d="M1.5 3 L5 6.5 L8.5 3" fill="none" stroke="#fff" stroke-width="1.6"/></svg><span style="left:32px">Layer</span></div>
</div>
<div class="panel" style="left:1278px;top:999px;width:93px;height:32px">
  <div class="ph"><svg style="left:5px" width="10" height="10" viewBox="0 0 10 10"><path d="M3 1.5 L6.5 5 L3 8.5" fill="none" stroke="#fff" stroke-width="1.6"/></svg><span style="left:28px">Export</span></div>
</div>
<div class="panel" style="left:1278px;top:1039px;width:93px;height:32px">
  <div class="ph"><svg style="left:5px" width="10" height="10" viewBox="0 0 10 10"><path d="M3 1.5 L6.5 5 L3 8.5" fill="none" stroke="#fff" stroke-width="1.6"/></svg><span style="left:28px">Import</span></div>
</div>
<div class="panel" style="left:1278px;top:1062px;width:634px;height:9px"></div>

<!-- category -->
<div id="catwrap">
 <div class="panel" style="left:8px;top:8px;width:292px;height:425px">
  <div class="ph"><svg style="left:7px" width="10" height="10" viewBox="0 0 10 10"><path d="M1.5 3 L5 6.5 L8.5 3" fill="none" stroke="#fff" stroke-width="1.6"/></svg><span style="left:32px">Category</span></div>
  <div class="row" style="top:35px">Coat</div>
  <div class="row" style="top:59.6px">Crop</div>
  <div class="row" style="top:84.2px">Dress</div>
  <div class="row" style="top:108.8px">Home</div>
  <div class="row" style="top:133.4px">Kimono</div>
  <div class="row" style="top:158px">Overall</div>
  <div class="row" style="top:182.6px">Pool</div>
  <div class="row" style="top:207.2px">School</div>
  <div class="row" style="top:231.8px">Scout</div>
  <div class="row" style="top:256.4px">Shirt</div>
  <div class="row" style="top:281px">Shirt_sort</div>
  <div class="row" style="top:305.6px">Skirt</div>
  <div class="row" style="top:330.2px">Sport</div>
  <div class="row" style="top:354.8px">Sweat</div>
  <div class="row" style="top:379.4px">Tiesuit</div>
  <div class="row sel" style="top:404px">Tshirt</div>
 </div>
</div>

<!-- assets -->
<div class="panel" style="left:1379px;top:55px;width:541px;height:976px">
  <div class="ph"><svg style="left:7px" width="10" height="10" viewBox="0 0 10 10"><path d="M1.5 3 L5 6.5 L8.5 3" fill="none" stroke="#fff" stroke-width="1.6"/></svg><span style="left:32px">Assets</span></div>
</div>
<div id="grid">
<div class="cell" style="left:2px;top:-164px"></div>
<div class="cell" style="left:180px;top:-164px"></div>
<div class="cell" style="left:358px;top:-164px"></div>
<div class="cell" style="left:2px;top:14px"><b>13</b><svg width="176" height="176" viewBox="0 0 176 176"><defs><clipPath id="c1"><path d="M76.3 46.3 C76.5 49 77.5 53.5 80 55.6 C83 55.8 92 51.5 99.3 46.7 C102 46.5 104 47 105.2 47.8 C108 49.5 109.5 52 110.4 54.8 C112 58 112.7 61 113 64.4 C113.6 67.5 114 70 114.1 72.6 C112 74 110.5 75.3 108.1 76.3 C106 77.2 104 78 102.2 78.5 C100.5 81.5 99.3 84.5 98.5 87.4 C97.6 89.5 97 91.5 97 93.3 C97.2 96.5 97.8 99.5 98.5 102.2 C99.1 105.5 99.9 108.5 100.7 111.1 C98 112.2 95 112.9 91.9 113.3 C87 114.4 82 114.8 77 114.8 C72 115.3 67 115.3 62.2 114.8 C58.5 114.2 55 113.2 52.2 111.9 C52.8 108 53.8 104.5 54.8 100.7 C56 96.5 57.2 92.5 57.8 88.1 C58.2 83 58 78 57.8 73.3 C57.8 68 58.5 63 59.6 58.5 C60.7 55.5 62.3 53 64.4 51.1 C66.5 49.5 69 48.5 71.1 47.8 C73 47.2 74.8 46.6 76.3 46.3 Z"/></clipPath></defs><path d="M76.3 46.3 C76.5 49 77.5 53.5 80 55.6 C83 55.8 92 51.5 99.3 46.7 C102 46.5 104 47 105.2 47.8 C108 49.5 109.5 52 110.4 54.8 C112 58 112.7 61 113 64.4 C113.6 67.5 114 70 114.1 72.6 C112 74 110.5 75.3 108.1 76.3 C106 77.2 104 78 102.2 78.5 C100.5 81.5 99.3 84.5 98.5 87.4 C97.6 89.5 97 91.5 97 93.3 C97.2 96.5 97.8 99.5 98.5 102.2 C99.1 105.5 99.9 108.5 100.7 111.1 C98 112.2 95 112.9 91.9 113.3 C87 114.4 82 114.8 77 114.8 C72 115.3 67 115.3 62.2 114.8 C58.5 114.2 55 113.2 52.2 111.9 C52.8 108 53.8 104.5 54.8 100.7 C56 96.5 57.2 92.5 57.8 88.1 C58.2 83 58 78 57.8 73.3 C57.8 68 58.5 63 59.6 58.5 C60.7 55.5 62.3 53 64.4 51.1 C66.5 49.5 69 48.5 71.1 47.8 C73 47.2 74.8 46.6 76.3 46.3 Z" fill="none" stroke="#f1f1f1" stroke-width="3" stroke-linejoin="round"/><path d="M76.3 46.3 C76.5 49 77.5 53.5 80 55.6 C83 55.8 92 51.5 99.3 46.7 C102 46.5 104 47 105.2 47.8 C108 49.5 109.5 52 110.4 54.8 C112 58 112.7 61 113 64.4 C113.6 67.5 114 70 114.1 72.6 C112 74 110.5 75.3 108.1 76.3 C106 77.2 104 78 102.2 78.5 C100.5 81.5 99.3 84.5 98.5 87.4 C97.6 89.5 97 91.5 97 93.3 C97.2 96.5 97.8 99.5 98.5 102.2 C99.1 105.5 99.9 108.5 100.7 111.1 C98 112.2 95 112.9 91.9 113.3 C87 114.4 82 114.8 77 114.8 C72 115.3 67 115.3 62.2 114.8 C58.5 114.2 55 113.2 52.2 111.9 C52.8 108 53.8 104.5 54.8 100.7 C56 96.5 57.2 92.5 57.8 88.1 C58.2 83 58 78 57.8 73.3 C57.8 68 58.5 63 59.6 58.5 C60.7 55.5 62.3 53 64.4 51.1 C66.5 49.5 69 48.5 71.1 47.8 C73 47.2 74.8 46.6 76.3 46.3 Z" fill="#4a4b53"/><g clip-path="url(#c1)"><path d="M102.2 78.5 C100.5 81.5 99.3 84.5 98.5 87.4 C97.6 89.5 97 91.5 97 93.3 C97.2 96.5 97.8 99.5 98.5 102.2 L100.7 111.1 L96.5 106.5 C94.5 102 93.5 98.5 91.9 96.3 L84.4 94.8 C88 94.5 90.5 93.5 91.9 91.9 C91 87 90.5 83.5 91.1 81.5 C93.5 79.5 95.5 77 96.3 75.6 Z" fill="#2c2d34"/><path d="M72.6 71.1 C74 77 76 83 78.5 88.9 C75.8 84 73.6 78 72.6 71.1 Z" fill="#2c2d34"/><path d="M60.7 103.7 C67 107.5 74 110 81.5 111.1 C73 111.3 65 108.5 60.7 103.7 Z" fill="#2c2d34"/><path d="M96 58 C97.5 62 98.5 66 99 72 C97 67 95.5 62 96 58 Z" fill="#2c2d34"/></g><path d="M76.3 46.3 C76.5 49 77.5 53.5 80 55.6 C83 55.8 92 51.5 99.3 46.7 C102 46.5 104 47 105.2 47.8 C108 49.5 109.5 52 110.4 54.8 C112 58 112.7 61 113 64.4 C113.6 67.5 114 70 114.1 72.6 C112 74 110.5 75.3 108.1 76.3 C106 77.2 104 78 102.2 78.5 C100.5 81.5 99.3 84.5 98.5 87.4 C97.6 89.5 97 91.5 97 93.3 C97.2 96.5 97.8 99.5 98.5 102.2 C99.1 105.5 99.9 108.5 100.7 111.1 C98 112.2 95 112.9 91.9 113.3 C87 114.4 82 114.8 77 114.8 C72 115.3 67 115.3 62.2 114.8 C58.5 114.2 55 113.2 52.2 111.9 C52.8 108 53.8 104.5 54.8 100.7 C56 96.5 57.2 92.5 57.8 88.1 C58.2 83 58 78 57.8 73.3 C57.8 68 58.5 63 59.6 58.5 C60.7 55.5 62.3 53 64.4 51.1 C66.5 49.5 69 48.5 71.1 47.8 C73 47.2 74.8 46.6 76.3 46.3 Z" fill="none" stroke="#34353c" stroke-width="0.9" stroke-linejoin="round"/></svg></div>
<div class="cell" style="left:180px;top:14px"><b>14</b><svg width="176" height="176" viewBox="0 0 176 176"><defs><clipPath id="c2"><path d="M72.6 47.8 C74 46.9 75.5 46.4 77 46.3 C76 48.5 75.4 50.5 75.6 52.6 C77 54.5 79 55.4 81.5 55.6 C84 55.6 86.5 55.1 88.9 54.1 C92.5 52.3 95.5 49.8 97.8 47 C99.3 46.8 100.8 46.9 102.2 47.4 C100.9 49 100 50.7 99.3 52.6 C98.2 55.3 97.4 58 97 60.7 C96.9 63.6 97.4 66.3 98.5 68.9 C99.7 70.5 101.2 71.7 103 72.6 C101.6 75.6 100.4 78.6 99.3 81.5 C97.8 85 96.6 88.5 95.6 91.9 C96.2 95.7 97.2 99.4 98.5 103 C99.4 105.8 100.4 108.5 101.5 111.1 C100.4 112.3 99.1 113.3 97.8 114.1 C92.5 115.2 87 115.6 81.5 115.6 C75.7 115.8 70 115.5 64.4 114.8 C60.8 114.2 57.3 113.2 54.1 111.9 C53.6 110.2 53.5 108.5 53.7 106.7 C54.5 102.1 55.7 97.7 57 93.3 C57.7 87.9 58 82.5 58.1 77 C58.5 72.9 59.4 69 60.7 65.2 C62 61.9 63.8 58.9 65.9 56.3 C68 53.3 70.2 50.5 72.6 47.8 Z"/></clipPath></defs><path d="M72.6 47.8 C74 46.9 75.5 46.4 77 46.3 C76 48.5 75.4 50.5 75.6 52.6 C77 54.5 79 55.4 81.5 55.6 C84 55.6 86.5 55.1 88.9 54.1 C92.5 52.3 95.5 49.8 97.8 47 C99.3 46.8 100.8 46.9 102.2 47.4 C100.9 49 100 50.7 99.3 52.6 C98.2 55.3 97.4 58 97 60.7 C96.9 63.6 97.4 66.3 98.5 68.9 C99.7 70.5 101.2 71.7 103 72.6 C101.6 75.6 100.4 78.6 99.3 81.5 C97.8 85 96.6 88.5 95.6 91.9 C96.2 95.7 97.2 99.4 98.5 103 C99.4 105.8 100.4 108.5 101.5 111.1 C100.4 112.3 99.1 113.3 97.8 114.1 C92.5 115.2 87 115.6 81.5 115.6 C75.7 115.8 70 115.5 64.4 114.8 C60.8 114.2 57.3 113.2 54.1 111.9 C53.6 110.2 53.5 108.5 53.7 106.7 C54.5 102.1 55.7 97.7 57 93.3 C57.7 87.9 58 82.5 58.1 77 C58.5 72.9 59.4 69 60.7 65.2 C62 61.9 63.8 58.9 65.9 56.3 C68 53.3 70.2 50.5 72.6 47.8 Z" fill="none" stroke="#f1f1f1" stroke-width="3" stroke-linejoin="round"/><path d="M72.6 47.8 C74 46.9 75.5 46.4 77 46.3 C76 48.5 75.4 50.5 75.6 52.6 C77 54.5 79 55.4 81.5 55.6 C84 55.6 86.5 55.1 88.9 54.1 C92.5 52.3 95.5 49.8 97.8 47 C99.3 46.8 100.8 46.9 102.2 47.4 C100.9 49 100 50.7 99.3 52.6 C98.2 55.3 97.4 58 97 60.7 C96.9 63.6 97.4 66.3 98.5 68.9 C99.7 70.5 101.2 71.7 103 72.6 C101.6 75.6 100.4 78.6 99.3 81.5 C97.8 85 96.6 88.5 95.6 91.9 C96.2 95.7 97.2 99.4 98.5 103 C99.4 105.8 100.4 108.5 101.5 111.1 C100.4 112.3 99.1 113.3 97.8 114.1 C92.5 115.2 87 115.6 81.5 115.6 C75.7 115.8 70 115.5 64.4 114.8 C60.8 114.2 57.3 113.2 54.1 111.9 C53.6 110.2 53.5 108.5 53.7 106.7 C54.5 102.1 55.7 97.7 57 93.3 C57.7 87.9 58 82.5 58.1 77 C58.5 72.9 59.4 69 60.7 65.2 C62 61.9 63.8 58.9 65.9 56.3 C68 53.3 70.2 50.5 72.6 47.8 Z" fill="#efefea"/><g clip-path="url(#c2)"><path d="M98.5 68.9 C99.7 70.5 101.2 71.7 103 72.6 C101.6 75.6 100.4 78.6 99.3 81.5 C97.8 85 96.6 88.5 95.6 91.9 C96.2 95.7 97.2 99.4 98.5 103 L101.5 111.1 L96 107 C94.5 101 93.8 97 94 92 C95 84 96.3 77 98.5 68.9 Z" fill="#b7b6cc"/><path d="M74 70 C74.6 77 75.5 83 77.5 89 C74.8 83 73.6 77 74 70 Z" fill="#b7b6cc"/><path d="M82 78 C84 83 87.5 88.5 93.5 92 C87.5 90 83.5 85 82 78 Z" fill="#b7b6cc"/></g><path d="M72.6 47.8 C74 46.9 75.5 46.4 77 46.3 C76 48.5 75.4 50.5 75.6 52.6 C77 54.5 79 55.4 81.5 55.6 C84 55.6 86.5 55.1 88.9 54.1 C92.5 52.3 95.5 49.8 97.8 47 C99.3 46.8 100.8 46.9 102.2 47.4 C100.9 49 100 50.7 99.3 52.6 C98.2 55.3 97.4 58 97 60.7 C96.9 63.6 97.4 66.3 98.5 68.9 C99.7 70.5 101.2 71.7 103 72.6 C101.6 75.6 100.4 78.6 99.3 81.5 C97.8 85 96.6 88.5 95.6 91.9 C96.2 95.7 97.2 99.4 98.5 103 C99.4 105.8 100.4 108.5 101.5 111.1 C100.4 112.3 99.1 113.3 97.8 114.1 C92.5 115.2 87 115.6 81.5 115.6 C75.7 115.8 70 115.5 64.4 114.8 C60.8 114.2 57.3 113.2 54.1 111.9 C53.6 110.2 53.5 108.5 53.7 106.7 C54.5 102.1 55.7 97.7 57 93.3 C57.7 87.9 58 82.5 58.1 77 C58.5 72.9 59.4 69 60.7 65.2 C62 61.9 63.8 58.9 65.9 56.3 C68 53.3 70.2 50.5 72.6 47.8 Z" fill="none" stroke="#9c9ca2" stroke-width="0.9" stroke-linejoin="round"/></svg></div>
<div class="cell" style="left:358px;top:14px"><b>15</b><svg width="176" height="176" viewBox="0 0 176 176"><defs><clipPath id="c3"><path d="M72.6 47.8 C74 46.9 75.5 46.4 77 46.3 C76 48.5 75.4 50.5 75.6 52.6 C77 54.5 79 55.4 81.5 55.6 C84 55.6 86.5 55.1 88.9 54.1 C92.5 52.3 95.5 49.8 97.8 47 C99.3 46.8 100.8 46.9 102.2 47.4 C100.9 49 100 50.7 99.3 52.6 C98.2 55.3 97.4 58 97 60.7 C96.9 63.6 97.4 66.3 98.5 68.9 C99.7 70.5 101.2 71.7 103 72.6 C101.6 75.6 100.4 78.6 99.3 81.5 C97.8 85 96.6 88.5 95.6 91.9 C96.2 95.7 97.2 99.4 98.5 103 C99.4 105.8 100.4 108.5 101.5 111.1 C100.4 112.3 99.1 113.3 97.8 114.1 C92.5 115.2 87 115.6 81.5 115.6 C75.7 115.8 70 115.5 64.4 114.8 C60.8 114.2 57.3 113.2 54.1 111.9 C53.6 110.2 53.5 108.5 53.7 106.7 C54.5 102.1 55.7 97.7 57 93.3 C57.7 87.9 58 82.5 58.1 77 C58.5 72.9 59.4 69 60.7 65.2 C62 61.9 63.8 58.9 65.9 56.3 C68 53.3 70.2 50.5 72.6 47.8 Z"/></clipPath></defs><path d="M72.6 47.8 C74 46.9 75.5 46.4 77 46.3 C76 48.5 75.4 50.5 75.6 52.6 C77 54.5 79 55.4 81.5 55.6 C84 55.6 86.5 55.1 88.9 54.1 C92.5 52.3 95.5 49.8 97.8 47 C99.3 46.8 100.8 46.9 102.2 47.4 C100.9 49 100 50.7 99.3 52.6 C98.2 55.3 97.4 58 97 60.7 C96.9 63.6 97.4 66.3 98.5 68.9 C99.7 70.5 101.2 71.7 103 72.6 C101.6 75.6 100.4 78.6 99.3 81.5 C97.8 85 96.6 88.5 95.6 91.9 C96.2 95.7 97.2 99.4 98.5 103 C99.4 105.8 100.4 108.5 101.5 111.1 C100.4 112.3 99.1 113.3 97.8 114.1 C92.5 115.2 87 115.6 81.5 115.6 C75.7 115.8 70 115.5 64.4 114.8 C60.8 114.2 57.3 113.2 54.1 111.9 C53.6 110.2 53.5 108.5 53.7 106.7 C54.5 102.1 55.7 97.7 57 93.3 C57.7 87.9 58 82.5 58.1 77 C58.5 72.9 59.4 69 60.7 65.2 C62 61.9 63.8 58.9 65.9 56.3 C68 53.3 70.2 50.5 72.6 47.8 Z" fill="none" stroke="#f1f1f1" stroke-width="3" stroke-linejoin="round"/><path d="M72.6 47.8 C74 46.9 75.5 46.4 77 46.3 C76 48.5 75.4 50.5 75.6 52.6 C77 54.5 79 55.4 81.5 55.6 C84 55.6 86.5 55.1 88.9 54.1 C92.5 52.3 95.5 49.8 97.8 47 C99.3 46.8 100.8 46.9 102.2 47.4 C100.9 49 100 50.7 99.3 52.6 C98.2 55.3 97.4 58 97 60.7 C96.9 63.6 97.4 66.3 98.5 68.9 C99.7 70.5 101.2 71.7 103 72.6 C101.6 75.6 100.4 78.6 99.3 81.5 C97.8 85 96.6 88.5 95.6 91.9 C96.2 95.7 97.2 99.4 98.5 103 C99.4 105.8 100.4 108.5 101.5 111.1 C100.4 112.3 99.1 113.3 97.8 114.1 C92.5 115.2 87 115.6 81.5 115.6 C75.7 115.8 70 115.5 64.4 114.8 C60.8 114.2 57.3 113.2 54.1 111.9 C53.6 110.2 53.5 108.5 53.7 106.7 C54.5 102.1 55.7 97.7 57 93.3 C57.7 87.9 58 82.5 58.1 77 C58.5 72.9 59.4 69 60.7 65.2 C62 61.9 63.8 58.9 65.9 56.3 C68 53.3 70.2 50.5 72.6 47.8 Z" fill="#f1f0ea"/><g clip-path="url(#c3)"><g transform="rotate(7 80 80)"><rect x="30" y="44" width="110" height="10.5" fill="#c5e2b0"/><rect x="30" y="61.5" width="110" height="7.5" fill="#c5e2b0"/><rect x="30" y="76.5" width="110" height="6.5" fill="#c5e2b0"/><rect x="30" y="89" width="110" height="6" fill="#c5e2b0"/><rect x="30" y="101.5" width="110" height="8" fill="#c5e2b0"/><rect x="30" y="112" width="110" height="6" fill="#c5e2b0"/></g><path d="M98.5 68.9 C99.7 70.5 101.2 71.7 103 72.6 C101.6 75.6 100.4 78.6 99.3 81.5 C97.8 85 96.6 88.5 95.6 91.9 C96.2 95.7 97.2 99.4 98.5 103 L101.5 111.1 L96 107 C94.5 101 93.8 97 94 92 C95 84 96.3 77 98.5 68.9 Z" fill="#cfd8c8"/><path d="M74 70 C74.6 77 75.5 83 77.5 89 C74.8 83 73.6 77 74 70 Z" fill="#cfd8c8"/><path d="M82 78 C84 83 87.5 88.5 93.5 92 C87.5 90 83.5 85 82 78 Z" fill="#cfd8c8"/></g><path d="M72.6 47.8 C74 46.9 75.5 46.4 77 46.3 C76 48.5 75.4 50.5 75.6 52.6 C77 54.5 79 55.4 81.5 55.6 C84 55.6 86.5 55.1 88.9 54.1 C92.5 52.3 95.5 49.8 97.8 47 C99.3 46.8 100.8 46.9 102.2 47.4 C100.9 49 100 50.7 99.3 52.6 C98.2 55.3 97.4 58 97 60.7 C96.9 63.6 97.4 66.3 98.5 68.9 C99.7 70.5 101.2 71.7 103 72.6 C101.6 75.6 100.4 78.6 99.3 81.5 C97.8 85 96.6 88.5 95.6 91.9 C96.2 95.7 97.2 99.4 98.5 103 C99.4 105.8 100.4 108.5 101.5 111.1 C100.4 112.3 99.1 113.3 97.8 114.1 C92.5 115.2 87 115.6 81.5 115.6 C75.7 115.8 70 115.5 64.4 114.8 C60.8 114.2 57.3 113.2 54.1 111.9 C53.6 110.2 53.5 108.5 53.7 106.7 C54.5 102.1 55.7 97.7 57 93.3 C57.7 87.9 58 82.5 58.1 77 C58.5 72.9 59.4 69 60.7 65.2 C62 61.9 63.8 58.9 65.9 56.3 C68 53.3 70.2 50.5 72.6 47.8 Z" fill="none" stroke="#83917c" stroke-width="0.9" stroke-linejoin="round"/></svg></div>
<div class="cell" style="left:2px;top:192px"><b>16</b><svg width="176" height="176" viewBox="0 0 176 176"><defs><clipPath id="c4"><path d="M72.6 47.8 C74 46.9 75.5 46.4 77 46.3 C76 48.5 75.4 50.5 75.6 52.6 C77 54.5 79 55.4 81.5 55.6 C84 55.6 86.5 55.1 88.9 54.1 C92.5 52.3 95.5 49.8 97.8 47 C99.3 46.8 100.8 46.9 102.2 47.4 C100.9 49 100 50.7 99.3 52.6 C98.2 55.3 97.4 58 97 60.7 C96.9 63.6 97.4 66.3 98.5 68.9 C99.7 70.5 101.2 71.7 103 72.6 C101.6 75.6 100.4 78.6 99.3 81.5 C97.8 85 96.6 88.5 95.6 91.9 C96.2 95.7 97.2 99.4 98.5 103 C99.4 105.8 100.4 108.5 101.5 111.1 C100.4 112.3 99.1 113.3 97.8 114.1 C92.5 115.2 87 115.6 81.5 115.6 C75.7 115.8 70 115.5 64.4 114.8 C60.8 114.2 57.3 113.2 54.1 111.9 C53.6 110.2 53.5 108.5 53.7 106.7 C54.5 102.1 55.7 97.7 57 93.3 C57.7 87.9 58 82.5 58.1 77 C58.5 72.9 59.4 69 60.7 65.2 C62 61.9 63.8 58.9 65.9 56.3 C68 53.3 70.2 50.5 72.6 47.8 Z"/></clipPath></defs><path d="M72.6 47.8 C74 46.9 75.5 46.4 77 46.3 C76 48.5 75.4 50.5 75.6 52.6 C77 54.5 79 55.4 81.5 55.6 C84 55.6 86.5 55.1 88.9 54.1 C92.5 52.3 95.5 49.8 97.8 47 C99.3 46.8 100.8 46.9 102.2 47.4 C100.9 49 100 50.7 99.3 52.6 C98.2 55.3 97.4 58 97 60.7 C96.9 63.6 97.4 66.3 98.5 68.9 C99.7 70.5 101.2 71.7 103 72.6 C101.6 75.6 100.4 78.6 99.3 81.5 C97.8 85 96.6 88.5 95.6 91.9 C96.2 95.7 97.2 99.4 98.5 103 C99.4 105.8 100.4 108.5 101.5 111.1 C100.4 112.3 99.1 113.3 97.8 114.1 C92.5 115.2 87 115.6 81.5 115.6 C75.7 115.8 70 115.5 64.4 114.8 C60.8 114.2 57.3 113.2 54.1 111.9 C53.6 110.2 53.5 108.5 53.7 106.7 C54.5 102.1 55.7 97.7 57 93.3 C57.7 87.9 58 82.5 58.1 77 C58.5 72.9 59.4 69 60.7 65.2 C62 61.9 63.8 58.9 65.9 56.3 C68 53.3 70.2 50.5 72.6 47.8 Z" fill="none" stroke="#f1f1f1" stroke-width="3" stroke-linejoin="round"/><path d="M72.6 47.8 C74 46.9 75.5 46.4 77 46.3 C76 48.5 75.4 50.5 75.6 52.6 C77 54.5 79 55.4 81.5 55.6 C84 55.6 86.5 55.1 88.9 54.1 C92.5 52.3 95.5 49.8 97.8 47 C99.3 46.8 100.8 46.9 102.2 47.4 C100.9 49 100 50.7 99.3 52.6 C98.2 55.3 97.4 58 97 60.7 C96.9 63.6 97.4 66.3 98.5 68.9 C99.7 70.5 101.2 71.7 103 72.6 C101.6 75.6 100.4 78.6 99.3 81.5 C97.8 85 96.6 88.5 95.6 91.9 C96.2 95.7 97.2 99.4 98.5 103 C99.4 105.8 100.4 108.5 101.5 111.1 C100.4 112.3 99.1 113.3 97.8 114.1 C92.5 115.2 87 115.6 81.5 115.6 C75.7 115.8 70 115.5 64.4 114.8 C60.8 114.2 57.3 113.2 54.1 111.9 C53.6 110.2 53.5 108.5 53.7 106.7 C54.5 102.1 55.7 97.7 57 93.3 C57.7 87.9 58 82.5 58.1 77 C58.5 72.9 59.4 69 60.7 65.2 C62 61.9 63.8 58.9 65.9 56.3 C68 53.3 70.2 50.5 72.6 47.8 Z" fill="#f6f6ee"/><g clip-path="url(#c4)"><g transform="rotate(7 80 80)"><rect x="30" y="44" width="110" height="10.5" fill="#f3ea8c"/><rect x="30" y="61.5" width="110" height="7.5" fill="#9dd4b4"/><rect x="30" y="76.5" width="110" height="6.5" fill="#f3ea8c"/><rect x="30" y="89" width="110" height="6" fill="#9dd4b4"/><rect x="30" y="101.5" width="110" height="8" fill="#f3ea8c"/><rect x="30" y="112" width="110" height="6" fill="#f3ea8c"/></g><path d="M98.5 68.9 C99.7 70.5 101.2 71.7 103 72.6 C101.6 75.6 100.4 78.6 99.3 81.5 C97.8 85 96.6 88.5 95.6 91.9 C96.2 95.7 97.2 99.4 98.5 103 L101.5 111.1 L96 107 C94.5 101 93.8 97 94 92 C95 84 96.3 77 98.5 68.9 Z" fill="#d8dcc0"/><path d="M74 70 C74.6 77 75.5 83 77.5 89 C74.8 83 73.6 77 74 70 Z" fill="#d8dcc0"/><path d="M82 78 C84 83 87.5 88.5 93.5 92 C87.5 90 83.5 85 82 78 Z" fill="#d8dcc0"/></g><path d="M72.6 47.8 C74 46.9 75.5 46.4 77 46.3 C76 48.5 75.4 50.5 75.6 52.6 C77 54.5 79 55.4 81.5 55.6 C84 55.6 86.5 55.1 88.9 54.1 C92.5 52.3 95.5 49.8 97.8 47 C99.3 46.8 100.8 46.9 102.2 47.4 C100.9 49 100 50.7 99.3 52.6 C98.2 55.3 97.4 58 97 60.7 C96.9 63.6 97.4 66.3 98.5 68.9 C99.7 70.5 101.2 71.7 103 72.6 C101.6 75.6 100.4 78.6 99.3 81.5 C97.8 85 96.6 88.5 95.6 91.9 C96.2 95.7 97.2 99.4 98.5 103 C99.4 105.8 100.4 108.5 101.5 111.1 C100.4 112.3 99.1 113.3 97.8 114.1 C92.5 115.2 87 115.6 81.5 115.6 C75.7 115.8 70 115.5 64.4 114.8 C60.8 114.2 57.3 113.2 54.1 111.9 C53.6 110.2 53.5 108.5 53.7 106.7 C54.5 102.1 55.7 97.7 57 93.3 C57.7 87.9 58 82.5 58.1 77 C58.5 72.9 59.4 69 60.7 65.2 C62 61.9 63.8 58.9 65.9 56.3 C68 53.3 70.2 50.5 72.6 47.8 Z" fill="none" stroke="#b062a0" stroke-width="1.3" stroke-linejoin="round"/></svg></div>
<div class="cell" style="left:180px;top:192px"><b>17</b><svg width="176" height="176" viewBox="0 0 176 176"><defs><clipPath id="c5"><path d="M72.6 47.8 C74 46.9 75.5 46.4 77 46.3 C76 48.5 75.4 50.5 75.6 52.6 C77 54.5 79 55.4 81.5 55.6 C84 55.6 86.5 55.1 88.9 54.1 C92.5 52.3 95.5 49.8 97.8 47 C99.3 46.8 100.8 46.9 102.2 47.4 C100.9 49 100 50.7 99.3 52.6 C98.2 55.3 97.4 58 97 60.7 C96.9 63.6 97.4 66.3 98.5 68.9 C99.7 70.5 101.2 71.7 103 72.6 C101.6 75.6 100.4 78.6 99.3 81.5 C97.8 85 96.6 88.5 95.6 91.9 C96.2 95.7 97.2 99.4 98.5 103 C99.4 105.8 100.4 108.5 101.5 111.1 C100.4 112.3 99.1 113.3 97.8 114.1 C92.5 115.2 87 115.6 81.5 115.6 C75.7 115.8 70 115.5 64.4 114.8 C60.8 114.2 57.3 113.2 54.1 111.9 C53.6 110.2 53.5 108.5 53.7 106.7 C54.5 102.1 55.7 97.7 57 93.3 C57.7 87.9 58 82.5 58.1 77 C58.5 72.9 59.4 69 60.7 65.2 C62 61.9 63.8 58.9 65.9 56.3 C68 53.3 70.2 50.5 72.6 47.8 Z"/></clipPath></defs><path d="M72.6 47.8 C74 46.9 75.5 46.4 77 46.3 C76 48.5 75.4 50.5 75.6 52.6 C77 54.5 79 55.4 81.5 55.6 C84 55.6 86.5 55.1 88.9 54.1 C92.5 52.3 95.5 49.8 97.8 47 C99.3 46.8 100.8 46.9 102.2 47.4 C100.9 49 100 50.7 99.3 52.6 C98.2 55.3 97.4 58 97 60.7 C96.9 63.6 97.4 66.3 98.5 68.9 C99.7 70.5 101.2 71.7 103 72.6 C101.6 75.6 100.4 78.6 99.3 81.5 C97.8 85 96.6 88.5 95.6 91.9 C96.2 95.7 97.2 99.4 98.5 103 C99.4 105.8 100.4 108.5 101.5 111.1 C100.4 112.3 99.1 113.3 97.8 114.1 C92.5 115.2 87 115.6 81.5 115.6 C75.7 115.8 70 115.5 64.4 114.8 C60.8 114.2 57.3 113.2 54.1 111.9 C53.6 110.2 53.5 108.5 53.7 106.7 C54.5 102.1 55.7 97.7 57 93.3 C57.7 87.9 58 82.5 58.1 77 C58.5 72.9 59.4 69 60.7 65.2 C62 61.9 63.8 58.9 65.9 56.3 C68 53.3 70.2 50.5 72.6 47.8 Z" fill="none" stroke="#f1f1f1" stroke-width="3" stroke-linejoin="round"/><path d="M72.6 47.8 C74 46.9 75.5 46.4 77 46.3 C76 48.5 75.4 50.5 75.6 52.6 C77 54.5 79 55.4 81.5 55.6 C84 55.6 86.5 55.1 88.9 54.1 C92.5 52.3 95.5 49.8 97.8 47 C99.3 46.8 100.8 46.9 102.2 47.4 C100.9 49 100 50.7 99.3 52.6 C98.2 55.3 97.4 58 97 60.7 C96.9 63.6 97.4 66.3 98.5 68.9 C99.7 70.5 101.2 71.7 103 72.6 C101.6 75.6 100.4 78.6 99.3 81.5 C97.8 85 96.6 88.5 95.6 91.9 C96.2 95.7 97.2 99.4 98.5 103 C99.4 105.8 100.4 108.5 101.5 111.1 C100.4 112.3 99.1 113.3 97.8 114.1 C92.5 115.2 87 115.6 81.5 115.6 C75.7 115.8 70 115.5 64.4 114.8 C60.8 114.2 57.3 113.2 54.1 111.9 C53.6 110.2 53.5 108.5 53.7 106.7 C54.5 102.1 55.7 97.7 57 93.3 C57.7 87.9 58 82.5 58.1 77 C58.5 72.9 59.4 69 60.7 65.2 C62 61.9 63.8 58.9 65.9 56.3 C68 53.3 70.2 50.5 72.6 47.8 Z" fill="#8e70c0"/><g clip-path="url(#c5)"><g transform="rotate(7 80 80)"><rect x="30" y="61.5" width="110" height="7.5" fill="#5fc4dc"/><rect x="30" y="76.5" width="110" height="6.5" fill="#5fc4dc"/><rect x="30" y="89" width="110" height="6" fill="#5fc4dc"/><rect x="30" y="101.5" width="110" height="8" fill="#5fc4dc"/><rect x="30" y="112" width="110" height="6" fill="#5fc4dc"/></g><path d="M98.5 68.9 C99.7 70.5 101.2 71.7 103 72.6 C101.6 75.6 100.4 78.6 99.3 81.5 C97.8 85 96.6 88.5 95.6 91.9 C96.2 95.7 97.2 99.4 98.5 103 L101.5 111.1 L96 107 C94.5 101 93.8 97 94 92 C95 84 96.3 77 98.5 68.9 Z" fill="#4a4a9c"/><path d="M74 70 C74.6 77 75.5 83 77.5 89 C74.8 83 73.6 77 74 70 Z" fill="#4a4a9c"/><path d="M82 78 C84 83 87.5 88.5 93.5 92 C87.5 90 83.5 85 82 78 Z" fill="#4a4a9c"/></g><path d="M72.6 47.8 C74 46.9 75.5 46.4 77 46.3 C76 48.5 75.4 50.5 75.6 52.6 C77 54.5 79 55.4 81.5 55.6 C84 55.6 86.5 55.1 88.9 54.1 C92.5 52.3 95.5 49.8 97.8 47 C99.3 46.8 100.8 46.9 102.2 47.4 C100.9 49 100 50.7 99.3 52.6 C98.2 55.3 97.4 58 97 60.7 C96.9 63.6 97.4 66.3 98.5 68.9 C99.7 70.5 101.2 71.7 103 72.6 C101.6 75.6 100.4 78.6 99.3 81.5 C97.8 85 96.6 88.5 95.6 91.9 C96.2 95.7 97.2 99.4 98.5 103 C99.4 105.8 100.4 108.5 101.5 111.1 C100.4 112.3 99.1 113.3 97.8 114.1 C92.5 115.2 87 115.6 81.5 115.6 C75.7 115.8 70 115.5 64.4 114.8 C60.8 114.2 57.3 113.2 54.1 111.9 C53.6 110.2 53.5 108.5 53.7 106.7 C54.5 102.1 55.7 97.7 57 93.3 C57.7 87.9 58 82.5 58.1 77 C58.5 72.9 59.4 69 60.7 65.2 C62 61.9 63.8 58.9 65.9 56.3 C68 53.3 70.2 50.5 72.6 47.8 Z" fill="none" stroke="#2b2b58" stroke-width="0.9" stroke-linejoin="round"/></svg></div>
<div class="cell" style="left:358px;top:192px"><b>18</b><svg width="176" height="176" viewBox="0 0 176 176"><defs><clipPath id="c6"><path d="M76.3 46.3 C76.5 49 77.5 53.5 80 55.6 C83 55.8 92 51.5 99.3 46.7 C102 46.5 104 47 105.2 47.8 C108 49.5 109.5 52 110.4 54.8 C112 58 112.7 61 113 64.4 C113.6 67.5 114 70 114.1 72.6 C112 74 110.5 75.3 108.1 76.3 C106 77.2 104 78 102.2 78.5 C100.5 81.5 99.3 84.5 98.5 87.4 C97.6 89.5 97 91.5 97 93.3 C97.2 96.5 97.8 99.5 98.5 102.2 C99.1 105.5 99.9 108.5 100.7 111.1 C98 112.2 95 112.9 91.9 113.3 C87 114.4 82 114.8 77 114.8 C72 115.3 67 115.3 62.2 114.8 C58.5 114.2 55 113.2 52.2 111.9 C52.8 108 53.8 104.5 54.8 100.7 C56 96.5 57.2 92.5 57.8 88.1 C58.2 83 58 78 57.8 73.3 C57.8 68 58.5 63 59.6 58.5 C60.7 55.5 62.3 53 64.4 51.1 C66.5 49.5 69 48.5 71.1 47.8 C73 47.2 74.8 46.6 76.3 46.3 Z"/></clipPath></defs><path d="M76.3 46.3 C76.5 49 77.5 53.5 80 55.6 C83 55.8 92 51.5 99.3 46.7 C102 46.5 104 47 105.2 47.8 C108 49.5 109.5 52 110.4 54.8 C112 58 112.7 61 113 64.4 C113.6 67.5 114 70 114.1 72.6 C112 74 110.5 75.3 108.1 76.3 C106 77.2 104 78 102.2 78.5 C100.5 81.5 99.3 84.5 98.5 87.4 C97.6 89.5 97 91.5 97 93.3 C97.2 96.5 97.8 99.5 98.5 102.2 C99.1 105.5 99.9 108.5 100.7 111.1 C98 112.2 95 112.9 91.9 113.3 C87 114.4 82 114.8 77 114.8 C72 115.3 67 115.3 62.2 114.8 C58.5 114.2 55 113.2 52.2 111.9 C52.8 108 53.8 104.5 54.8 100.7 C56 96.5 57.2 92.5 57.8 88.1 C58.2 83 58 78 57.8 73.3 C57.8 68 58.5 63 59.6 58.5 C60.7 55.5 62.3 53 64.4 51.1 C66.5 49.5 69 48.5 71.1 47.8 C73 47.2 74.8 46.6 76.3 46.3 Z" fill="none" stroke="#f1f1f1" stroke-width="3" stroke-linejoin="round"/><path d="M76.3 46.3 C76.5 49 77.5 53.5 80 55.6 C83 55.8 92 51.5 99.3 46.7 C102 46.5 104 47 105.2 47.8 C108 49.5 109.5 52 110.4 54.8 C112 58 112.7 61 113 64.4 C113.6 67.5 114 70 114.1 72.6 C112 74 110.5 75.3 108.1 76.3 C106 77.2 104 78 102.2 78.5 C100.5 81.5 99.3 84.5 98.5 87.4 C97.6 89.5 97 91.5 97 93.3 C97.2 96.5 97.8 99.5 98.5 102.2 C99.1 105.5 99.9 108.5 100.7 111.1 C98 112.2 95 112.9 91.9 113.3 C87 114.4 82 114.8 77 114.8 C72 115.3 67 115.3 62.2 114.8 C58.5 114.2 55 113.2 52.2 111.9 C52.8 108 53.8 104.5 54.8 100.7 C56 96.5 57.2 92.5 57.8 88.1 C58.2 83 58 78 57.8 73.3 C57.8 68 58.5 63 59.6 58.5 C60.7 55.5 62.3 53 64.4 51.1 C66.5 49.5 69 48.5 71.1 47.8 C73 47.2 74.8 46.6 76.3 46.3 Z" fill="#4f7fc6"/><g clip-path="url(#c6)"><g transform="rotate(7 80 80)"><rect x="30" y="60" width="110" height="8" fill="#62cfe2"/><rect x="30" y="75" width="110" height="8" fill="#62cfe2"/><rect x="30" y="90" width="110" height="8" fill="#62cfe2"/><rect x="30" y="105" width="110" height="8" fill="#62cfe2"/></g><path d="M102.2 78.5 C100.5 81.5 99.3 84.5 98.5 87.4 C97.6 89.5 97 91.5 97 93.3 C97.2 96.5 97.8 99.5 98.5 102.2 L100.7 111.1 L96.5 106.5 C94.5 102 93.5 98.5 91.9 96.3 L84.4 94.8 C88 94.5 90.5 93.5 91.9 91.9 C91 87 90.5 83.5 91.1 81.5 C93.5 79.5 95.5 77 96.3 75.6 Z" fill="#3a62ac"/><path d="M72.6 71.1 C74 77 76 83 78.5 88.9 C75.8 84 73.6 78 72.6 71.1 Z" fill="#3a62ac"/><path d="M60.7 103.7 C67 107.5 74 110 81.5 111.1 C73 111.3 65 108.5 60.7 103.7 Z" fill="#3a62ac"/><path d="M96 58 C97.5 62 98.5 66 99 72 C97 67 95.5 62 96 58 Z" fill="#3a62ac"/></g><path d="M76.3 46.3 C76.5 49 77.5 53.5 80 55.6 C83 55.8 92 51.5 99.3 46.7 C102 46.5 104 47 105.2 47.8 C108 49.5 109.5 52 110.4 54.8 C112 58 112.7 61 113 64.4 C113.6 67.5 114 70 114.1 72.6 C112 74 110.5 75.3 108.1 76.3 C106 77.2 104 78 102.2 78.5 C100.5 81.5 99.3 84.5 98.5 87.4 C97.6 89.5 97 91.5 97 93.3 C97.2 96.5 97.8 99.5 98.5 102.2 C99.1 105.5 99.9 108.5 100.7 111.1 C98 112.2 95 112.9 91.9 113.3 C87 114.4 82 114.8 77 114.8 C72 115.3 67 115.3 62.2 114.8 C58.5 114.2 55 113.2 52.2 111.9 C52.8 108 53.8 104.5 54.8 100.7 C56 96.5 57.2 92.5 57.8 88.1 C58.2 83 58 78 57.8 73.3 C57.8 68 58.5 63 59.6 58.5 C60.7 55.5 62.3 53 64.4 51.1 C66.5 49.5 69 48.5 71.1 47.8 C73 47.2 74.8 46.6 76.3 46.3 Z" fill="none" stroke="#2f4f90" stroke-width="0.9" stroke-linejoin="round"/></svg></div>
<div class="cell" style="left:2px;top:370px"><b>19</b><svg width="176" height="176" viewBox="0 0 176 176"><defs><clipPath id="c7"><path d="M76.3 46.3 C76.5 49 77.5 53.5 80 55.6 C83 55.8 92 51.5 99.3 46.7 C102 46.5 104 47 105.2 47.8 C108 49.5 109.5 52 110.4 54.8 C112 58 112.7 61 113 64.4 C113.6 67.5 114 70 114.1 72.6 C112 74 110.5 75.3 108.1 76.3 C106 77.2 104 78 102.2 78.5 C100.5 81.5 99.3 84.5 98.5 87.4 C97.6 89.5 97 91.5 97 93.3 C97.2 96.5 97.8 99.5 98.5 102.2 C99.1 105.5 99.9 108.5 100.7 111.1 C98 112.2 95 112.9 91.9 113.3 C87 114.4 82 114.8 77 114.8 C72 115.3 67 115.3 62.2 114.8 C58.5 114.2 55 113.2 52.2 111.9 C52.8 108 53.8 104.5 54.8 100.7 C56 96.5 57.2 92.5 57.8 88.1 C58.2 83 58 78 57.8 73.3 C57.8 68 58.5 63 59.6 58.5 C60.7 55.5 62.3 53 64.4 51.1 C66.5 49.5 69 48.5 71.1 47.8 C73 47.2 74.8 46.6 76.3 46.3 Z"/></clipPath></defs><path d="M76.3 46.3 C76.5 49 77.5 53.5 80 55.6 C83 55.8 92 51.5 99.3 46.7 C102 46.5 104 47 105.2 47.8 C108 49.5 109.5 52 110.4 54.8 C112 58 112.7 61 113 64.4 C113.6 67.5 114 70 114.1 72.6 C112 74 110.5 75.3 108.1 76.3 C106 77.2 104 78 102.2 78.5 C100.5 81.5 99.3 84.5 98.5 87.4 C97.6 89.5 97 91.5 97 93.3 C97.2 96.5 97.8 99.5 98.5 102.2 C99.1 105.5 99.9 108.5 100.7 111.1 C98 112.2 95 112.9 91.9 113.3 C87 114.4 82 114.8 77 114.8 C72 115.3 67 115.3 62.2 114.8 C58.5 114.2 55 113.2 52.2 111.9 C52.8 108 53.8 104.5 54.8 100.7 C56 96.5 57.2 92.5 57.8 88.1 C58.2 83 58 78 57.8 73.3 C57.8 68 58.5 63 59.6 58.5 C60.7 55.5 62.3 53 64.4 51.1 C66.5 49.5 69 48.5 71.1 47.8 C73 47.2 74.8 46.6 76.3 46.3 Z" fill="none" stroke="#f1f1f1" stroke-width="3" stroke-linejoin="round"/><path d="M76.3 46.3 C76.5 49 77.5 53.5 80 55.6 C83 55.8 92 51.5 99.3 46.7 C102 46.5 104 47 105.2 47.8 C108 49.5 109.5 52 110.4 54.8 C112 58 112.7 61 113 64.4 C113.6 67.5 114 70 114.1 72.6 C112 74 110.5 75.3 108.1 76.3 C106 77.2 104 78 102.2 78.5 C100.5 81.5 99.3 84.5 98.5 87.4 C97.6 89.5 97 91.5 97 93.3 C97.2 96.5 97.8 99.5 98.5 102.2 C99.1 105.5 99.9 108.5 100.7 111.1 C98 112.2 95 112.9 91.9 113.3 C87 114.4 82 114.8 77 114.8 C72 115.3 67 115.3 62.2 114.8 C58.5 114.2 55 113.2 52.2 111.9 C52.8 108 53.8 104.5 54.8 100.7 C56 96.5 57.2 92.5 57.8 88.1 C58.2 83 58 78 57.8 73.3 C57.8 68 58.5 63 59.6 58.5 C60.7 55.5 62.3 53 64.4 51.1 C66.5 49.5 69 48.5 71.1 47.8 C73 47.2 74.8 46.6 76.3 46.3 Z" fill="#c8eef2"/><g clip-path="url(#c7)"><g transform="rotate(7 80 80)"><rect x="30" y="60" width="110" height="8" fill="#58b4ca"/><rect x="30" y="75" width="110" height="8" fill="#58b4ca"/><rect x="30" y="90" width="110" height="8" fill="#58b4ca"/><rect x="30" y="105" width="110" height="8" fill="#58b4ca"/></g><path d="M99.3 46.7 C102 46.5 104 47 105.2 47.8 C108 49.5 109.5 52 110.4 54.8 C112 58 112.7 61 113 64.4 C113.6 67.5 114 70 114.1 72.6 C112 74 110.5 75.3 108.1 76.3 C106 77.2 104 78 102.2 78.5 C101.5 70 99 60 95 50.5 Z" fill="#6a70d2"/><path d="M76.3 46.3 C74.8 46.6 73 47.2 71.1 47.8 C69 48.5 66.5 49.5 64.4 51.1 C62.3 53 60.7 55.5 59.6 58.5 C58.8 61.5 58.3 64 58 67 C62 60 68 54.5 77.5 51.5 Z" fill="#6a70d2"/><path d="M102.2 78.5 C100.5 81.5 99.3 84.5 98.5 87.4 C97.6 89.5 97 91.5 97 93.3 C97.2 96.5 97.8 99.5 98.5 102.2 L100.7 111.1 L96.5 106.5 C94.5 102 93.5 98.5 91.9 96.3 L84.4 94.8 C88 94.5 90.5 93.5 91.9 91.9 C91 87 90.5 83.5 91.1 81.5 C93.5 79.5 95.5 77 96.3 75.6 Z" fill="#7cc4d4"/><path d="M72.6 71.1 C74 77 76 83 78.5 88.9 C75.8 84 73.6 78 72.6 71.1 Z" fill="#7cc4d4"/><path d="M60.7 103.7 C67 107.5 74 110 81.5 111.1 C73 111.3 65 108.5 60.7 103.7 Z" fill="#7cc4d4"/><path d="M96 58 C97.5 62 98.5 66 99 72 C97 67 95.5 62 96 58 Z" fill="#7cc4d4"/></g><path d="M76.3 46.3 C76.5 49 77.5 53.5 80 55.6 C83 55.8 92 51.5 99.3 46.7 C102 46.5 104 47 105.2 47.8 C108 49.5 109.5 52 110.4 54.8 C112 58 112.7 61 113 64.4 C113.6 67.5 114 70 114.1 72.6 C112 74 110.5 75.3 108.1 76.3 C106 77.2 104 78 102.2 78.5 C100.5 81.5 99.3 84.5 98.5 87.4 C97.6 89.5 97 91.5 97 93.3 C97.2 96.5 97.8 99.5 98.5 102.2 C99.1 105.5 99.9 108.5 100.7 111.1 C98 112.2 95 112.9 91.9 113.3 C87 114.4 82 114.8 77 114.8 C72 115.3 67 115.3 62.2 114.8 C58.5 114.2 55 113.2 52.2 111.9 C52.8 108 53.8 104.5 54.8 100.7 C56 96.5 57.2 92.5 57.8 88.1 C58.2 83 58 78 57.8 73.3 C57.8 68 58.5 63 59.6 58.5 C60.7 55.5 62.3 53 64.4 51.1 C66.5 49.5 69 48.5 71.1 47.8 C73 47.2 74.8 46.6 76.3 46.3 Z" fill="none" stroke="#4a6a9a" stroke-width="0.9" stroke-linejoin="round"/></svg></div>
<div class="cell" style="left:180px;top:370px"><b>20</b><svg width="176" height="176" viewBox="0 0 176 176"><defs><clipPath id="c8"><path d="M71.9 47.8 C73.3 47.2 74.8 47 76.3 47 C75 49.1 74.3 51.2 74.4 53.3 C75.8 55.5 77.7 56.7 80 57 C82.6 56.8 85 56 87.4 54.8 C91.2 52.6 94.7 49.9 97.8 46.7 C99.3 46.5 100.8 46.6 102.2 47 C100.7 49.2 99.5 51.6 98.5 54.1 C97.3 57.5 96.6 60.9 96.3 64.4 C96.6 66.8 97.3 69 98.5 71.1 C99.8 72.4 101.3 73.4 103 74.1 C101.7 77.4 100.2 80.6 98.5 83.7 C97.1 85.8 95.5 87.8 93.7 89.6 C91.8 87.6 89.7 85.9 87.4 84.4 C84.1 83.2 80.6 82.5 77 82.2 C73.3 81.6 69.6 81.4 65.9 81.5 C63.9 81.7 61.9 82 60 82.6 C58.8 78.9 58 75 57.8 71.1 C58.9 68.2 60.4 65.5 62.2 63 C64 60.3 65.7 57.6 67.4 54.8 C68.8 52.4 70.3 50.1 71.9 47.8 Z"/></clipPath></defs><path d="M71.9 47.8 C73.3 47.2 74.8 47 76.3 47 C75 49.1 74.3 51.2 74.4 53.3 C75.8 55.5 77.7 56.7 80 57 C82.6 56.8 85 56 87.4 54.8 C91.2 52.6 94.7 49.9 97.8 46.7 C99.3 46.5 100.8 46.6 102.2 47 C100.7 49.2 99.5 51.6 98.5 54.1 C97.3 57.5 96.6 60.9 96.3 64.4 C96.6 66.8 97.3 69 98.5 71.1 C99.8 72.4 101.3 73.4 103 74.1 C101.7 77.4 100.2 80.6 98.5 83.7 C97.1 85.8 95.5 87.8 93.7 89.6 C91.8 87.6 89.7 85.9 87.4 84.4 C84.1 83.2 80.6 82.5 77 82.2 C73.3 81.6 69.6 81.4 65.9 81.5 C63.9 81.7 61.9 82 60 82.6 C58.8 78.9 58 75 57.8 71.1 C58.9 68.2 60.4 65.5 62.2 63 C64 60.3 65.7 57.6 67.4 54.8 C68.8 52.4 70.3 50.1 71.9 47.8 Z" fill="none" stroke="#f1f1f1" stroke-width="3" stroke-linejoin="round"/><path d="M71.9 47.8 C73.3 47.2 74.8 47 76.3 47 C75 49.1 74.3 51.2 74.4 53.3 C75.8 55.5 77.7 56.7 80 57 C82.6 56.8 85 56 87.4 54.8 C91.2 52.6 94.7 49.9 97.8 46.7 C99.3 46.5 100.8 46.6 102.2 47 C100.7 49.2 99.5 51.6 98.5 54.1 C97.3 57.5 96.6 60.9 96.3 64.4 C96.6 66.8 97.3 69 98.5 71.1 C99.8 72.4 101.3 73.4 103 74.1 C101.7 77.4 100.2 80.6 98.5 83.7 C97.1 85.8 95.5 87.8 93.7 89.6 C91.8 87.6 89.7 85.9 87.4 84.4 C84.1 83.2 80.6 82.5 77 82.2 C73.3 81.6 69.6 81.4 65.9 81.5 C63.9 81.7 61.9 82 60 82.6 C58.8 78.9 58 75 57.8 71.1 C58.9 68.2 60.4 65.5 62.2 63 C64 60.3 65.7 57.6 67.4 54.8 C68.8 52.4 70.3 50.1 71.9 47.8 Z" fill="#dac0e8"/><g clip-path="url(#c8)"><path d="M98.5 71.1 C99.8 72.4 101.3 73.4 103 74.1 C101.7 77.4 100.2 80.6 98.5 83.7 C97.1 85.8 95.5 87.8 93.7 89.6 C92.8 88.6 91.8 87.6 90.8 86.8 C93.5 82 96 77 98.5 71.1 Z" fill="#d98cba"/></g><path d="M71.9 47.8 C73.3 47.2 74.8 47 76.3 47 C75 49.1 74.3 51.2 74.4 53.3 C75.8 55.5 77.7 56.7 80 57 C82.6 56.8 85 56 87.4 54.8 C91.2 52.6 94.7 49.9 97.8 46.7 C99.3 46.5 100.8 46.6 102.2 47 C100.7 49.2 99.5 51.6 98.5 54.1 C97.3 57.5 96.6 60.9 96.3 64.4 C96.6 66.8 97.3 69 98.5 71.1 C99.8 72.4 101.3 73.4 103 74.1 C101.7 77.4 100.2 80.6 98.5 83.7 C97.1 85.8 95.5 87.8 93.7 89.6 C91.8 87.6 89.7 85.9 87.4 84.4 C84.1 83.2 80.6 82.5 77 82.2 C73.3 81.6 69.6 81.4 65.9 81.5 C63.9 81.7 61.9 82 60 82.6 C58.8 78.9 58 75 57.8 71.1 C58.9 68.2 60.4 65.5 62.2 63 C64 60.3 65.7 57.6 67.4 54.8 C68.8 52.4 70.3 50.1 71.9 47.8 Z" fill="none" stroke="#8a6a98" stroke-width="0.9" stroke-linejoin="round"/></svg></div>
<div class="cell" style="left:358px;top:370px"><b>21</b><svg width="176" height="176" viewBox="0 0 176 176"><defs><clipPath id="c9"><path d="M71.9 47.8 C73.3 47.2 74.8 47 76.3 47 C75 49.1 74.3 51.2 74.4 53.3 C75.8 55.5 77.7 56.7 80 57 C82.6 56.8 85 56 87.4 54.8 C91.2 52.6 94.7 49.9 97.8 46.7 C99.3 46.5 100.8 46.6 102.2 47 C100.7 49.2 99.5 51.6 98.5 54.1 C97.3 57.5 96.6 60.9 96.3 64.4 C96.6 66.8 97.3 69 98.5 71.1 C99.8 72.4 101.3 73.4 103 74.1 C101.7 77.4 100.2 80.6 98.5 83.7 C97.1 85.8 95.5 87.8 93.7 89.6 C91.8 87.6 89.7 85.9 87.4 84.4 C84.1 83.2 80.6 82.5 77 82.2 C73.3 81.6 69.6 81.4 65.9 81.5 C63.9 81.7 61.9 82 60 82.6 C58.8 78.9 58 75 57.8 71.1 C58.9 68.2 60.4 65.5 62.2 63 C64 60.3 65.7 57.6 67.4 54.8 C68.8 52.4 70.3 50.1 71.9 47.8 Z"/></clipPath></defs><path d="M71.9 47.8 C73.3 47.2 74.8 47 76.3 47 C75 49.1 74.3 51.2 74.4 53.3 C75.8 55.5 77.7 56.7 80 57 C82.6 56.8 85 56 87.4 54.8 C91.2 52.6 94.7 49.9 97.8 46.7 C99.3 46.5 100.8 46.6 102.2 47 C100.7 49.2 99.5 51.6 98.5 54.1 C97.3 57.5 96.6 60.9 96.3 64.4 C96.6 66.8 97.3 69 98.5 71.1 C99.8 72.4 101.3 73.4 103 74.1 C101.7 77.4 100.2 80.6 98.5 83.7 C97.1 85.8 95.5 87.8 93.7 89.6 C91.8 87.6 89.7 85.9 87.4 84.4 C84.1 83.2 80.6 82.5 77 82.2 C73.3 81.6 69.6 81.4 65.9 81.5 C63.9 81.7 61.9 82 60 82.6 C58.8 78.9 58 75 57.8 71.1 C58.9 68.2 60.4 65.5 62.2 63 C64 60.3 65.7 57.6 67.4 54.8 C68.8 52.4 70.3 50.1 71.9 47.8 Z" fill="none" stroke="#f1f1f1" stroke-width="3" stroke-linejoin="round"/><path d="M71.9 47.8 C73.3 47.2 74.8 47 76.3 47 C75 49.1 74.3 51.2 74.4 53.3 C75.8 55.5 77.7 56.7 80 57 C82.6 56.8 85 56 87.4 54.8 C91.2 52.6 94.7 49.9 97.8 46.7 C99.3 46.5 100.8 46.6 102.2 47 C100.7 49.2 99.5 51.6 98.5 54.1 C97.3 57.5 96.6 60.9 96.3 64.4 C96.6 66.8 97.3 69 98.5 71.1 C99.8 72.4 101.3 73.4 103 74.1 C101.7 77.4 100.2 80.6 98.5 83.7 C97.1 85.8 95.5 87.8 93.7 89.6 C91.8 87.6 89.7 85.9 87.4 84.4 C84.1 83.2 80.6 82.5 77 82.2 C73.3 81.6 69.6 81.4 65.9 81.5 C63.9 81.7 61.9 82 60 82.6 C58.8 78.9 58 75 57.8 71.1 C58.9 68.2 60.4 65.5 62.2 63 C64 60.3 65.7 57.6 67.4 54.8 C68.8 52.4 70.3 50.1 71.9 47.8 Z" fill="#f7f7ec"/><g clip-path="url(#c9)"><g transform="rotate(8 80 80)"><rect x="30" y="45" width="110" height="5" fill="#c4df6c"/><rect x="30" y="54.5" width="110" height="5" fill="#c4df6c"/><rect x="30" y="64" width="110" height="5" fill="#c4df6c"/><rect x="30" y="73.5" width="110" height="5" fill="#c4df6c"/><rect x="30" y="83" width="110" height="5" fill="#c4df6c"/></g><path d="M98.5 71.1 C99.8 72.4 101.3 73.4 103 74.1 C101.7 77.4 100.2 80.6 98.5 83.7 C97.1 85.8 95.5 87.8 93.7 89.6 C92.8 88.6 91.8 87.6 90.8 86.8 C93.5 82 96 77 98.5 71.1 Z" fill="#dfe8b8"/></g><path d="M71.9 47.8 C73.3 47.2 74.8 47 76.3 47 C75 49.1 74.3 51.2 74.4 53.3 C75.8 55.5 77.7 56.7 80 57 C82.6 56.8 85 56 87.4 54.8 C91.2 52.6 94.7 49.9 97.8 46.7 C99.3 46.5 100.8 46.6 102.2 47 C100.7 49.2 99.5 51.6 98.5 54.1 C97.3 57.5 96.6 60.9 96.3 64.4 C96.6 66.8 97.3 69 98.5 71.1 C99.8 72.4 101.3 73.4 103 74.1 C101.7 77.4 100.2 80.6 98.5 83.7 C97.1 85.8 95.5 87.8 93.7 89.6 C91.8 87.6 89.7 85.9 87.4 84.4 C84.1 83.2 80.6 82.5 77 82.2 C73.3 81.6 69.6 81.4 65.9 81.5 C63.9 81.7 61.9 82 60 82.6 C58.8 78.9 58 75 57.8 71.1 C58.9 68.2 60.4 65.5 62.2 63 C64 60.3 65.7 57.6 67.4 54.8 C68.8 52.4 70.3 50.1 71.9 47.8 Z" fill="none" stroke="#7a8a50" stroke-width="0.9" stroke-linejoin="round"/></svg></div>
<div class="cell" style="left:2px;top:548px"><b>22</b><svg width="176" height="176" viewBox="0 0 176 176"><defs><clipPath id="c10"><path d="M76.3 46.3 C76.5 49 77.5 53.5 80 55.6 C83 55.8 92 51.5 99.3 46.7 C102 46.5 104 47 105.2 47.8 C108 49.5 109.5 52 110.4 54.8 C112 58 112.7 61 113 64.4 C113.6 67.5 114 70 114.1 72.6 C112 74 110.5 75.3 108.1 76.3 C106 77.2 104 78 102.2 78.5 C100.5 81.5 99.3 84.5 98.5 87.4 C97.6 89.5 97 91.5 97 93.3 C97.2 96.5 97.8 99.5 98.5 102.2 C99.1 105.5 99.9 108.5 100.7 111.1 C98 112.2 95 112.9 91.9 113.3 C87 114.4 82 114.8 77 114.8 C72 115.3 67 115.3 62.2 114.8 C58.5 114.2 55 113.2 52.2 111.9 C52.8 108 53.8 104.5 54.8 100.7 C56 96.5 57.2 92.5 57.8 88.1 C58.2 83 58 78 57.8 73.3 C57.8 68 58.5 63 59.6 58.5 C60.7 55.5 62.3 53 64.4 51.1 C66.5 49.5 69 48.5 71.1 47.8 C73 47.2 74.8 46.6 76.3 46.3 Z"/></clipPath></defs><path d="M76.3 46.3 C76.5 49 77.5 53.5 80 55.6 C83 55.8 92 51.5 99.3 46.7 C102 46.5 104 47 105.2 47.8 C108 49.5 109.5 52 110.4 54.8 C112 58 112.7 61 113 64.4 C113.6 67.5 114 70 114.1 72.6 C112 74 110.5 75.3 108.1 76.3 C106 77.2 104 78 102.2 78.5 C100.5 81.5 99.3 84.5 98.5 87.4 C97.6 89.5 97 91.5 97 93.3 C97.2 96.5 97.8 99.5 98.5 102.2 C99.1 105.5 99.9 108.5 100.7 111.1 C98 112.2 95 112.9 91.9 113.3 C87 114.4 82 114.8 77 114.8 C72 115.3 67 115.3 62.2 114.8 C58.5 114.2 55 113.2 52.2 111.9 C52.8 108 53.8 104.5 54.8 100.7 C56 96.5 57.2 92.5 57.8 88.1 C58.2 83 58 78 57.8 73.3 C57.8 68 58.5 63 59.6 58.5 C60.7 55.5 62.3 53 64.4 51.1 C66.5 49.5 69 48.5 71.1 47.8 C73 47.2 74.8 46.6 76.3 46.3 Z" fill="none" stroke="#f1f1f1" stroke-width="3" stroke-linejoin="round"/><path d="M76.3 46.3 C76.5 49 77.5 53.5 80 55.6 C83 55.8 92 51.5 99.3 46.7 C102 46.5 104 47 105.2 47.8 C108 49.5 109.5 52 110.4 54.8 C112 58 112.7 61 113 64.4 C113.6 67.5 114 70 114.1 72.6 C112 74 110.5 75.3 108.1 76.3 C106 77.2 104 78 102.2 78.5 C100.5 81.5 99.3 84.5 98.5 87.4 C97.6 89.5 97 91.5 97 93.3 C97.2 96.5 97.8 99.5 98.5 102.2 C99.1 105.5 99.9 108.5 100.7 111.1 C98 112.2 95 112.9 91.9 113.3 C87 114.4 82 114.8 77 114.8 C72 115.3 67 115.3 62.2 114.8 C58.5 114.2 55 113.2 52.2 111.9 C52.8 108 53.8 104.5 54.8 100.7 C56 96.5 57.2 92.5 57.8 88.1 C58.2 83 58 78 57.8 73.3 C57.8 68 58.5 63 59.6 58.5 C60.7 55.5 62.3 53 64.4 51.1 C66.5 49.5 69 48.5 71.1 47.8 C73 47.2 74.8 46.6 76.3 46.3 Z" fill="#e8ebf1"/><g clip-path="url(#c10)"><path d="M102.2 78.5 C100.5 81.5 99.3 84.5 98.5 87.4 C97.6 89.5 97 91.5 97 93.3 C97.2 96.5 97.8 99.5 98.5 102.2 L100.7 111.1 L96.5 106.5 C94.5 102 93.5 98.5 91.9 96.3 L84.4 94.8 C88 94.5 90.5 93.5 91.9 91.9 C91 87 90.5 83.5 91.1 81.5 C93.5 79.5 95.5 77 96.3 75.6 Z" fill="#b6bdcc"/><path d="M72.6 71.1 C74 77 76 83 78.5 88.9 C75.8 84 73.6 78 72.6 71.1 Z" fill="#b6bdcc"/><path d="M60.7 103.7 C67 107.5 74 110 81.5 111.1 C73 111.3 65 108.5 60.7 103.7 Z" fill="#b6bdcc"/><path d="M96 58 C97.5 62 98.5 66 99 72 C97 67 95.5 62 96 58 Z" fill="#b6bdcc"/></g><path d="M76.3 46.3 C76.5 49 77.5 53.5 80 55.6 C83 55.8 92 51.5 99.3 46.7 C102 46.5 104 47 105.2 47.8 C108 49.5 109.5 52 110.4 54.8 C112 58 112.7 61 113 64.4 C113.6 67.5 114 70 114.1 72.6 C112 74 110.5 75.3 108.1 76.3 C106 77.2 104 78 102.2 78.5 C100.5 81.5 99.3 84.5 98.5 87.4 C97.6 89.5 97 91.5 97 93.3 C97.2 96.5 97.8 99.5 98.5 102.2 C99.1 105.5 99.9 108.5 100.7 111.1 C98 112.2 95 112.9 91.9 113.3 C87 114.4 82 114.8 77 114.8 C72 115.3 67 115.3 62.2 114.8 C58.5 114.2 55 113.2 52.2 111.9 C52.8 108 53.8 104.5 54.8 100.7 C56 96.5 57.2 92.5 57.8 88.1 C58.2 83 58 78 57.8 73.3 C57.8 68 58.5 63 59.6 58.5 C60.7 55.5 62.3 53 64.4 51.1 C66.5 49.5 69 48.5 71.1 47.8 C73 47.2 74.8 46.6 76.3 46.3 Z" fill="none" stroke="#9ca2ae" stroke-width="0.9" stroke-linejoin="round"/></svg></div>
<div class="cell" style="left:180px;top:548px"><b>23</b><svg width="176" height="176" viewBox="0 0 176 176"><defs><clipPath id="c11"><path d="M71.9 47.8 C73.3 47.2 74.8 47 76.3 47 C75 49.1 74.3 51.2 74.4 53.3 C75.8 55.5 77.7 56.7 80 57 C82.6 56.8 85 56 87.4 54.8 C91.2 52.6 94.7 49.9 97.8 46.7 C99.3 46.5 100.8 46.6 102.2 47 C100.7 49.2 99.5 51.6 98.5 54.1 C97.3 57.5 96.6 60.9 96.3 64.4 C96.6 66.8 97.3 69 98.5 71.1 C99.8 72.4 101.3 73.4 103 74.1 C101.7 77.4 100.2 80.6 98.5 83.7 C97.1 85.8 95.5 87.8 93.7 89.6 C91.8 87.6 89.7 85.9 87.4 84.4 C84.1 83.2 80.6 82.5 77 82.2 C73.3 81.6 69.6 81.4 65.9 81.5 C63.9 81.7 61.9 82 60 82.6 C58.8 78.9 58 75 57.8 71.1 C58.9 68.2 60.4 65.5 62.2 63 C64 60.3 65.7 57.6 67.4 54.8 C68.8 52.4 70.3 50.1 71.9 47.8 Z"/></clipPath></defs><path d="M71.9 47.8 C73.3 47.2 74.8 47 76.3 47 C75 49.1 74.3 51.2 74.4 53.3 C75.8 55.5 77.7 56.7 80 57 C82.6 56.8 85 56 87.4 54.8 C91.2 52.6 94.7 49.9 97.8 46.7 C99.3 46.5 100.8 46.6 102.2 47 C100.7 49.2 99.5 51.6 98.5 54.1 C97.3 57.5 96.6 60.9 96.3 64.4 C96.6 66.8 97.3 69 98.5 71.1 C99.8 72.4 101.3 73.4 103 74.1 C101.7 77.4 100.2 80.6 98.5 83.7 C97.1 85.8 95.5 87.8 93.7 89.6 C91.8 87.6 89.7 85.9 87.4 84.4 C84.1 83.2 80.6 82.5 77 82.2 C73.3 81.6 69.6 81.4 65.9 81.5 C63.9 81.7 61.9 82 60 82.6 C58.8 78.9 58 75 57.8 71.1 C58.9 68.2 60.4 65.5 62.2 63 C64 60.3 65.7 57.6 67.4 54.8 C68.8 52.4 70.3 50.1 71.9 47.8 Z" fill="none" stroke="#f1f1f1" stroke-width="3" stroke-linejoin="round"/><path d="M71.9 47.8 C73.3 47.2 74.8 47 76.3 47 C75 49.1 74.3 51.2 74.4 53.3 C75.8 55.5 77.7 56.7 80 57 C82.6 56.8 85 56 87.4 54.8 C91.2 52.6 94.7 49.9 97.8 46.7 C99.3 46.5 100.8 46.6 102.2 47 C100.7 49.2 99.5 51.6 98.5 54.1 C97.3 57.5 96.6 60.9 96.3 64.4 C96.6 66.8 97.3 69 98.5 71.1 C99.8 72.4 101.3 73.4 103 74.1 C101.7 77.4 100.2 80.6 98.5 83.7 C97.1 85.8 95.5 87.8 93.7 89.6 C91.8 87.6 89.7 85.9 87.4 84.4 C84.1 83.2 80.6 82.5 77 82.2 C73.3 81.6 69.6 81.4 65.9 81.5 C63.9 81.7 61.9 82 60 82.6 C58.8 78.9 58 75 57.8 71.1 C58.9 68.2 60.4 65.5 62.2 63 C64 60.3 65.7 57.6 67.4 54.8 C68.8 52.4 70.3 50.1 71.9 47.8 Z" fill="#37455b"/><g clip-path="url(#c11)"><path d="M98.5 71.1 C99.8 72.4 101.3 73.4 103 74.1 C101.7 77.4 100.2 80.6 98.5 83.7 C97.1 85.8 95.5 87.8 93.7 89.6 C92.8 88.6 91.8 87.6 90.8 86.8 C93.5 82 96 77 98.5 71.1 Z" fill="#28344a"/></g><path d="M71.9 47.8 C73.3 47.2 74.8 47 76.3 47 C75 49.1 74.3 51.2 74.4 53.3 C75.8 55.5 77.7 56.7 80 57 C82.6 56.8 85 56 87.4 54.8 C91.2 52.6 94.7 49.9 97.8 46.7 C99.3 46.5 100.8 46.6 102.2 47 C100.7 49.2 99.5 51.6 98.5 54.1 C97.3 57.5 96.6 60.9 96.3 64.4 C96.6 66.8 97.3 69 98.5 71.1 C99.8 72.4 101.3 73.4 103 74.1 C101.7 77.4 100.2 80.6 98.5 83.7 C97.1 85.8 95.5 87.8 93.7 89.6 C91.8 87.6 89.7 85.9 87.4 84.4 C84.1 83.2 80.6 82.5 77 82.2 C73.3 81.6 69.6 81.4 65.9 81.5 C63.9 81.7 61.9 82 60 82.6 C58.8 78.9 58 75 57.8 71.1 C58.9 68.2 60.4 65.5 62.2 63 C64 60.3 65.7 57.6 67.4 54.8 C68.8 52.4 70.3 50.1 71.9 47.8 Z" fill="none" stroke="#1f2838" stroke-width="0.9" stroke-linejoin="round"/></svg></div>
<div class="cell" style="left:358px;top:548px"><b>24</b><svg width="176" height="176" viewBox="0 0 176 176"><defs><clipPath id="c12"><path d="M76.3 46.3 C76.5 49 77.5 53.5 80 55.6 C83 55.8 92 51.5 99.3 46.7 C102 46.5 104 47 105.2 47.8 C108 49.5 109.5 52 110.4 54.8 C112 58 112.7 61 113 64.4 C113.6 67.5 114 70 114.1 72.6 C112 74 110.5 75.3 108.1 76.3 C106 77.2 104 78 102.2 78.5 C100.5 81.5 99.3 84.5 98.5 87.4 C97.6 89.5 97 91.5 97 93.3 C97.2 96.5 97.8 99.5 98.5 102.2 C99.1 105.5 99.9 108.5 100.7 111.1 C98 112.2 95 112.9 91.9 113.3 C87 114.4 82 114.8 77 114.8 C72 115.3 67 115.3 62.2 114.8 C58.5 114.2 55 113.2 52.2 111.9 C52.8 108 53.8 104.5 54.8 100.7 C56 96.5 57.2 92.5 57.8 88.1 C58.2 83 58 78 57.8 73.3 C57.8 68 58.5 63 59.6 58.5 C60.7 55.5 62.3 53 64.4 51.1 C66.5 49.5 69 48.5 71.1 47.8 C73 47.2 74.8 46.6 76.3 46.3 Z"/></clipPath></defs><path d="M76.3 46.3 C76.5 49 77.5 53.5 80 55.6 C83 55.8 92 51.5 99.3 46.7 C102 46.5 104 47 105.2 47.8 C108 49.5 109.5 52 110.4 54.8 C112 58 112.7 61 113 64.4 C113.6 67.5 114 70 114.1 72.6 C112 74 110.5 75.3 108.1 76.3 C106 77.2 104 78 102.2 78.5 C100.5 81.5 99.3 84.5 98.5 87.4 C97.6 89.5 97 91.5 97 93.3 C97.2 96.5 97.8 99.5 98.5 102.2 C99.1 105.5 99.9 108.5 100.7 111.1 C98 112.2 95 112.9 91.9 113.3 C87 114.4 82 114.8 77 114.8 C72 115.3 67 115.3 62.2 114.8 C58.5 114.2 55 113.2 52.2 111.9 C52.8 108 53.8 104.5 54.8 100.7 C56 96.5 57.2 92.5 57.8 88.1 C58.2 83 58 78 57.8 73.3 C57.8 68 58.5 63 59.6 58.5 C60.7 55.5 62.3 53 64.4 51.1 C66.5 49.5 69 48.5 71.1 47.8 C73 47.2 74.8 46.6 76.3 46.3 Z" fill="none" stroke="#f1f1f1" stroke-width="3" stroke-linejoin="round"/><path d="M76.3 46.3 C76.5 49 77.5 53.5 80 55.6 C83 55.8 92 51.5 99.3 46.7 C102 46.5 104 47 105.2 47.8 C108 49.5 109.5 52 110.4 54.8 C112 58 112.7 61 113 64.4 C113.6 67.5 114 70 114.1 72.6 C112 74 110.5 75.3 108.1 76.3 C106 77.2 104 78 102.2 78.5 C100.5 81.5 99.3 84.5 98.5 87.4 C97.6 89.5 97 91.5 97 93.3 C97.2 96.5 97.8 99.5 98.5 102.2 C99.1 105.5 99.9 108.5 100.7 111.1 C98 112.2 95 112.9 91.9 113.3 C87 114.4 82 114.8 77 114.8 C72 115.3 67 115.3 62.2 114.8 C58.5 114.2 55 113.2 52.2 111.9 C52.8 108 53.8 104.5 54.8 100.7 C56 96.5 57.2 92.5 57.8 88.1 C58.2 83 58 78 57.8 73.3 C57.8 68 58.5 63 59.6 58.5 C60.7 55.5 62.3 53 64.4 51.1 C66.5 49.5 69 48.5 71.1 47.8 C73 47.2 74.8 46.6 76.3 46.3 Z" fill="#4a95e5"/><g clip-path="url(#c12)"><path d="M102.2 78.5 C100.5 81.5 99.3 84.5 98.5 87.4 C97.6 89.5 97 91.5 97 93.3 C97.2 96.5 97.8 99.5 98.5 102.2 L100.7 111.1 L96.5 106.5 C94.5 102 93.5 98.5 91.9 96.3 L84.4 94.8 C88 94.5 90.5 93.5 91.9 91.9 C91 87 90.5 83.5 91.1 81.5 C93.5 79.5 95.5 77 96.3 75.6 Z" fill="#2f6ec6"/><path d="M72.6 71.1 C74 77 76 83 78.5 88.9 C75.8 84 73.6 78 72.6 71.1 Z" fill="#2f6ec6"/><path d="M60.7 103.7 C67 107.5 74 110 81.5 111.1 C73 111.3 65 108.5 60.7 103.7 Z" fill="#2f6ec6"/><path d="M96 58 C97.5 62 98.5 66 99 72 C97 67 95.5 62 96 58 Z" fill="#2f6ec6"/></g><path d="M76.3 46.3 C76.5 49 77.5 53.5 80 55.6 C83 55.8 92 51.5 99.3 46.7 C102 46.5 104 47 105.2 47.8 C108 49.5 109.5 52 110.4 54.8 C112 58 112.7 61 113 64.4 C113.6 67.5 114 70 114.1 72.6 C112 74 110.5 75.3 108.1 76.3 C106 77.2 104 78 102.2 78.5 C100.5 81.5 99.3 84.5 98.5 87.4 C97.6 89.5 97 91.5 97 93.3 C97.2 96.5 97.8 99.5 98.5 102.2 C99.1 105.5 99.9 108.5 100.7 111.1 C98 112.2 95 112.9 91.9 113.3 C87 114.4 82 114.8 77 114.8 C72 115.3 67 115.3 62.2 114.8 C58.5 114.2 55 113.2 52.2 111.9 C52.8 108 53.8 104.5 54.8 100.7 C56 96.5 57.2 92.5 57.8 88.1 C58.2 83 58 78 57.8 73.3 C57.8 68 58.5 63 59.6 58.5 C60.7 55.5 62.3 53 64.4 51.1 C66.5 49.5 69 48.5 71.1 47.8 C73 47.2 74.8 46.6 76.3 46.3 Z" fill="none" stroke="#2f62b0" stroke-width="0.9" stroke-linejoin="round"/></svg></div>
<div class="cell" style="left:2px;top:726px"><b>25</b><svg width="176" height="176" viewBox="0 0 176 176"><defs><clipPath id="c13"><path d="M76.3 46.3 C76.5 49 77.5 53.5 80 55.6 C83 55.8 92 51.5 99.3 46.7 C102 46.5 104 47 105.2 47.8 C108 49.5 109.5 52 110.4 54.8 C112 58 112.7 61 113 64.4 C113.6 67.5 114 70 114.1 72.6 C112 74 110.5 75.3 108.1 76.3 C106 77.2 104 78 102.2 78.5 C100.5 81.5 99.3 84.5 98.5 87.4 C97.6 89.5 97 91.5 97 93.3 C97.2 96.5 97.8 99.5 98.5 102.2 C99.1 105.5 99.9 108.5 100.7 111.1 C98 112.2 95 112.9 91.9 113.3 C87 114.4 82 114.8 77 114.8 C72 115.3 67 115.3 62.2 114.8 C58.5 114.2 55 113.2 52.2 111.9 C52.8 108 53.8 104.5 54.8 100.7 C56 96.5 57.2 92.5 57.8 88.1 C58.2 83 58 78 57.8 73.3 C57.8 68 58.5 63 59.6 58.5 C60.7 55.5 62.3 53 64.4 51.1 C66.5 49.5 69 48.5 71.1 47.8 C73 47.2 74.8 46.6 76.3 46.3 Z"/></clipPath></defs><path d="M76.3 46.3 C76.5 49 77.5 53.5 80 55.6 C83 55.8 92 51.5 99.3 46.7 C102 46.5 104 47 105.2 47.8 C108 49.5 109.5 52 110.4 54.8 C112 58 112.7 61 113 64.4 C113.6 67.5 114 70 114.1 72.6 C112 74 110.5 75.3 108.1 76.3 C106 77.2 104 78 102.2 78.5 C100.5 81.5 99.3 84.5 98.5 87.4 C97.6 89.5 97 91.5 97 93.3 C97.2 96.5 97.8 99.5 98.5 102.2 C99.1 105.5 99.9 108.5 100.7 111.1 C98 112.2 95 112.9 91.9 113.3 C87 114.4 82 114.8 77 114.8 C72 115.3 67 115.3 62.2 114.8 C58.5 114.2 55 113.2 52.2 111.9 C52.8 108 53.8 104.5 54.8 100.7 C56 96.5 57.2 92.5 57.8 88.1 C58.2 83 58 78 57.8 73.3 C57.8 68 58.5 63 59.6 58.5 C60.7 55.5 62.3 53 64.4 51.1 C66.5 49.5 69 48.5 71.1 47.8 C73 47.2 74.8 46.6 76.3 46.3 Z" fill="none" stroke="#f1f1f1" stroke-width="3" stroke-linejoin="round"/><path d="M76.3 46.3 C76.5 49 77.5 53.5 80 55.6 C83 55.8 92 51.5 99.3 46.7 C102 46.5 104 47 105.2 47.8 C108 49.5 109.5 52 110.4 54.8 C112 58 112.7 61 113 64.4 C113.6 67.5 114 70 114.1 72.6 C112 74 110.5 75.3 108.1 76.3 C106 77.2 104 78 102.2 78.5 C100.5 81.5 99.3 84.5 98.5 87.4 C97.6 89.5 97 91.5 97 93.3 C97.2 96.5 97.8 99.5 98.5 102.2 C99.1 105.5 99.9 108.5 100.7 111.1 C98 112.2 95 112.9 91.9 113.3 C87 114.4 82 114.8 77 114.8 C72 115.3 67 115.3 62.2 114.8 C58.5 114.2 55 113.2 52.2 111.9 C52.8 108 53.8 104.5 54.8 100.7 C56 96.5 57.2 92.5 57.8 88.1 C58.2 83 58 78 57.8 73.3 C57.8 68 58.5 63 59.6 58.5 C60.7 55.5 62.3 53 64.4 51.1 C66.5 49.5 69 48.5 71.1 47.8 C73 47.2 74.8 46.6 76.3 46.3 Z" fill="#6bb5f3"/><g clip-path="url(#c13)"><path d="M99.3 46.7 C102 46.5 104 47 105.2 47.8 C108 49.5 109.5 52 110.4 54.8 C112 58 112.7 61 113 64.4 C113.6 67.5 114 70 114.1 72.6 C112 74 110.5 75.3 108.1 76.3 C106 77.2 104 78 102.2 78.5 C101.5 70 99 60 95 50.5 Z" fill="#3f79da"/><path d="M76.3 46.3 C74.8 46.6 73 47.2 71.1 47.8 C69 48.5 66.5 49.5 64.4 51.1 C62.3 53 60.7 55.5 59.6 58.5 C58.8 61.5 58.3 64 58 67 C62 60 68 54.5 77.5 51.5 Z" fill="#3f79da"/><path d="M102.2 78.5 C100.5 81.5 99.3 84.5 98.5 87.4 C97.6 89.5 97 91.5 97 93.3 C97.2 96.5 97.8 99.5 98.5 102.2 L100.7 111.1 L96.5 106.5 C94.5 102 93.5 98.5 91.9 96.3 L84.4 94.8 C88 94.5 90.5 93.5 91.9 91.9 C91 87 90.5 83.5 91.1 81.5 C93.5 79.5 95.5 77 96.3 75.6 Z" fill="#4a92e0"/><path d="M72.6 71.1 C74 77 76 83 78.5 88.9 C75.8 84 73.6 78 72.6 71.1 Z" fill="#4a92e0"/><path d="M60.7 103.7 C67 107.5 74 110 81.5 111.1 C73 111.3 65 108.5 60.7 103.7 Z" fill="#4a92e0"/><path d="M96 58 C97.5 62 98.5 66 99 72 C97 67 95.5 62 96 58 Z" fill="#4a92e0"/></g><path d="M76.3 46.3 C76.5 49 77.5 53.5 80 55.6 C83 55.8 92 51.5 99.3 46.7 C102 46.5 104 47 105.2 47.8 C108 49.5 109.5 52 110.4 54.8 C112 58 112.7 61 113 64.4 C113.6 67.5 114 70 114.1 72.6 C112 74 110.5 75.3 108.1 76.3 C106 77.2 104 78 102.2 78.5 C100.5 81.5 99.3 84.5 98.5 87.4 C97.6 89.5 97 91.5 97 93.3 C97.2 96.5 97.8 99.5 98.5 102.2 C99.1 105.5 99.9 108.5 100.7 111.1 C98 112.2 95 112.9 91.9 113.3 C87 114.4 82 114.8 77 114.8 C72 115.3 67 115.3 62.2 114.8 C58.5 114.2 55 113.2 52.2 111.9 C52.8 108 53.8 104.5 54.8 100.7 C56 96.5 57.2 92.5 57.8 88.1 C58.2 83 58 78 57.8 73.3 C57.8 68 58.5 63 59.6 58.5 C60.7 55.5 62.3 53 64.4 51.1 C66.5 49.5 69 48.5 71.1 47.8 C73 47.2 74.8 46.6 76.3 46.3 Z" fill="none" stroke="#2f62b0" stroke-width="0.9" stroke-linejoin="round"/></svg></div>
<div class="cell" style="left:180px;top:726px"><b>26</b><svg width="176" height="176" viewBox="0 0 176 176"><defs><clipPath id="c14"><path d="M76.3 46.3 C76.5 49 77.5 53.5 80 55.6 C83 55.8 92 51.5 99.3 46.7 C102 46.5 104 47 105.2 47.8 C108 49.5 109.5 52 110.4 54.8 C112 58 112.7 61 113 64.4 C113.6 67.5 114 70 114.1 72.6 C112 74 110.5 75.3 108.1 76.3 C106 77.2 104 78 102.2 78.5 C100.5 81.5 99.3 84.5 98.5 87.4 C97.6 89.5 97 91.5 97 93.3 C97.2 96.5 97.8 99.5 98.5 102.2 C99.1 105.5 99.9 108.5 100.7 111.1 C98 112.2 95 112.9 91.9 113.3 C87 114.4 82 114.8 77 114.8 C72 115.3 67 115.3 62.2 114.8 C58.5 114.2 55 113.2 52.2 111.9 C52.8 108 53.8 104.5 54.8 100.7 C56 96.5 57.2 92.5 57.8 88.1 C58.2 83 58 78 57.8 73.3 C57.8 68 58.5 63 59.6 58.5 C60.7 55.5 62.3 53 64.4 51.1 C66.5 49.5 69 48.5 71.1 47.8 C73 47.2 74.8 46.6 76.3 46.3 Z"/></clipPath></defs><path d="M76.3 46.3 C76.5 49 77.5 53.5 80 55.6 C83 55.8 92 51.5 99.3 46.7 C102 46.5 104 47 105.2 47.8 C108 49.5 109.5 52 110.4 54.8 C112 58 112.7 61 113 64.4 C113.6 67.5 114 70 114.1 72.6 C112 74 110.5 75.3 108.1 76.3 C106 77.2 104 78 102.2 78.5 C100.5 81.5 99.3 84.5 98.5 87.4 C97.6 89.5 97 91.5 97 93.3 C97.2 96.5 97.8 99.5 98.5 102.2 C99.1 105.5 99.9 108.5 100.7 111.1 C98 112.2 95 112.9 91.9 113.3 C87 114.4 82 114.8 77 114.8 C72 115.3 67 115.3 62.2 114.8 C58.5 114.2 55 113.2 52.2 111.9 C52.8 108 53.8 104.5 54.8 100.7 C56 96.5 57.2 92.5 57.8 88.1 C58.2 83 58 78 57.8 73.3 C57.8 68 58.5 63 59.6 58.5 C60.7 55.5 62.3 53 64.4 51.1 C66.5 49.5 69 48.5 71.1 47.8 C73 47.2 74.8 46.6 76.3 46.3 Z" fill="none" stroke="#f1f1f1" stroke-width="3" stroke-linejoin="round"/><path d="M76.3 46.3 C76.5 49 77.5 53.5 80 55.6 C83 55.8 92 51.5 99.3 46.7 C102 46.5 104 47 105.2 47.8 C108 49.5 109.5 52 110.4 54.8 C112 58 112.7 61 113 64.4 C113.6 67.5 114 70 114.1 72.6 C112 74 110.5 75.3 108.1 76.3 C106 77.2 104 78 102.2 78.5 C100.5 81.5 99.3 84.5 98.5 87.4 C97.6 89.5 97 91.5 97 93.3 C97.2 96.5 97.8 99.5 98.5 102.2 C99.1 105.5 99.9 108.5 100.7 111.1 C98 112.2 95 112.9 91.9 113.3 C87 114.4 82 114.8 77 114.8 C72 115.3 67 115.3 62.2 114.8 C58.5 114.2 55 113.2 52.2 111.9 C52.8 108 53.8 104.5 54.8 100.7 C56 96.5 57.2 92.5 57.8 88.1 C58.2 83 58 78 57.8 73.3 C57.8 68 58.5 63 59.6 58.5 C60.7 55.5 62.3 53 64.4 51.1 C66.5 49.5 69 48.5 71.1 47.8 C73 47.2 74.8 46.6 76.3 46.3 Z" fill="#344664"/><g clip-path="url(#c14)"><path d="M102.2 78.5 C100.5 81.5 99.3 84.5 98.5 87.4 C97.6 89.5 97 91.5 97 93.3 C97.2 96.5 97.8 99.5 98.5 102.2 L100.7 111.1 L96.5 106.5 C94.5 102 93.5 98.5 91.9 96.3 L84.4 94.8 C88 94.5 90.5 93.5 91.9 91.9 C91 87 90.5 83.5 91.1 81.5 C93.5 79.5 95.5 77 96.3 75.6 Z" fill="#222e48"/><path d="M72.6 71.1 C74 77 76 83 78.5 88.9 C75.8 84 73.6 78 72.6 71.1 Z" fill="#222e48"/><path d="M60.7 103.7 C67 107.5 74 110 81.5 111.1 C73 111.3 65 108.5 60.7 103.7 Z" fill="#222e48"/><path d="M96 58 C97.5 62 98.5 66 99 72 C97 67 95.5 62 96 58 Z" fill="#222e48"/></g><path d="M76.3 46.3 C76.5 49 77.5 53.5 80 55.6 C83 55.8 92 51.5 99.3 46.7 C102 46.5 104 47 105.2 47.8 C108 49.5 109.5 52 110.4 54.8 C112 58 112.7 61 113 64.4 C113.6 67.5 114 70 114.1 72.6 C112 74 110.5 75.3 108.1 76.3 C106 77.2 104 78 102.2 78.5 C100.5 81.5 99.3 84.5 98.5 87.4 C97.6 89.5 97 91.5 97 93.3 C97.2 96.5 97.8 99.5 98.5 102.2 C99.1 105.5 99.9 108.5 100.7 111.1 C98 112.2 95 112.9 91.9 113.3 C87 114.4 82 114.8 77 114.8 C72 115.3 67 115.3 62.2 114.8 C58.5 114.2 55 113.2 52.2 111.9 C52.8 108 53.8 104.5 54.8 100.7 C56 96.5 57.2 92.5 57.8 88.1 C58.2 83 58 78 57.8 73.3 C57.8 68 58.5 63 59.6 58.5 C60.7 55.5 62.3 53 64.4 51.1 C66.5 49.5 69 48.5 71.1 47.8 C73 47.2 74.8 46.6 76.3 46.3 Z" fill="none" stroke="#1e2a40" stroke-width="0.9" stroke-linejoin="round"/></svg></div>
<div class="cell" style="left:358px;top:726px"><b>27</b><svg width="176" height="176" viewBox="0 0 176 176"><defs><clipPath id="c15"><path d="M76.3 46.3 C76.5 49 77.5 53.5 80 55.6 C83 55.8 92 51.5 99.3 46.7 C102 46.5 104 47 105.2 47.8 C108 49.5 109.5 52 110.4 54.8 C112 58 112.7 61 113 64.4 C113.6 67.5 114 70 114.1 72.6 C112 74 110.5 75.3 108.1 76.3 C106 77.2 104 78 102.2 78.5 C100.5 81.5 99.3 84.5 98.5 87.4 C97.6 89.5 97 91.5 97 93.3 C97.2 96.5 97.8 99.5 98.5 102.2 C99.1 105.5 99.9 108.5 100.7 111.1 C98 112.2 95 112.9 91.9 113.3 C87 114.4 82 114.8 77 114.8 C72 115.3 67 115.3 62.2 114.8 C58.5 114.2 55 113.2 52.2 111.9 C52.8 108 53.8 104.5 54.8 100.7 C56 96.5 57.2 92.5 57.8 88.1 C58.2 83 58 78 57.8 73.3 C57.8 68 58.5 63 59.6 58.5 C60.7 55.5 62.3 53 64.4 51.1 C66.5 49.5 69 48.5 71.1 47.8 C73 47.2 74.8 46.6 76.3 46.3 Z"/></clipPath></defs><path d="M76.3 46.3 C76.5 49 77.5 53.5 80 55.6 C83 55.8 92 51.5 99.3 46.7 C102 46.5 104 47 105.2 47.8 C108 49.5 109.5 52 110.4 54.8 C112 58 112.7 61 113 64.4 C113.6 67.5 114 70 114.1 72.6 C112 74 110.5 75.3 108.1 76.3 C106 77.2 104 78 102.2 78.5 C100.5 81.5 99.3 84.5 98.5 87.4 C97.6 89.5 97 91.5 97 93.3 C97.2 96.5 97.8 99.5 98.5 102.2 C99.1 105.5 99.9 108.5 100.7 111.1 C98 112.2 95 112.9 91.9 113.3 C87 114.4 82 114.8 77 114.8 C72 115.3 67 115.3 62.2 114.8 C58.5 114.2 55 113.2 52.2 111.9 C52.8 108 53.8 104.5 54.8 100.7 C56 96.5 57.2 92.5 57.8 88.1 C58.2 83 58 78 57.8 73.3 C57.8 68 58.5 63 59.6 58.5 C60.7 55.5 62.3 53 64.4 51.1 C66.5 49.5 69 48.5 71.1 47.8 C73 47.2 74.8 46.6 76.3 46.3 Z" fill="none" stroke="#f1f1f1" stroke-width="3" stroke-linejoin="round"/><path d="M76.3 46.3 C76.5 49 77.5 53.5 80 55.6 C83 55.8 92 51.5 99.3 46.7 C102 46.5 104 47 105.2 47.8 C108 49.5 109.5 52 110.4 54.8 C112 58 112.7 61 113 64.4 C113.6 67.5 114 70 114.1 72.6 C112 74 110.5 75.3 108.1 76.3 C106 77.2 104 78 102.2 78.5 C100.5 81.5 99.3 84.5 98.5 87.4 C97.6 89.5 97 91.5 97 93.3 C97.2 96.5 97.8 99.5 98.5 102.2 C99.1 105.5 99.9 108.5 100.7 111.1 C98 112.2 95 112.9 91.9 113.3 C87 114.4 82 114.8 77 114.8 C72 115.3 67 115.3 62.2 114.8 C58.5 114.2 55 113.2 52.2 111.9 C52.8 108 53.8 104.5 54.8 100.7 C56 96.5 57.2 92.5 57.8 88.1 C58.2 83 58 78 57.8 73.3 C57.8 68 58.5 63 59.6 58.5 C60.7 55.5 62.3 53 64.4 51.1 C66.5 49.5 69 48.5 71.1 47.8 C73 47.2 74.8 46.6 76.3 46.3 Z" fill="#4f4d56"/><g clip-path="url(#c15)"><path d="M57 76 C66 71 80 73 101 70 L99 86 C88 90 78 84 72 90 C66 88 60 86 57.5 84 Z" fill="#22232d"/><path d="M102.2 78.5 C100.5 81.5 99.3 84.5 98.5 87.4 C97.6 89.5 97 91.5 97 93.3 C97.2 96.5 97.8 99.5 98.5 102.2 L100.7 111.1 L96.5 106.5 C94.5 102 93.5 98.5 91.9 96.3 L84.4 94.8 C88 94.5 90.5 93.5 91.9 91.9 C91 87 90.5 83.5 91.1 81.5 C93.5 79.5 95.5 77 96.3 75.6 Z" fill="#2a2a33"/><path d="M72.6 71.1 C74 77 76 83 78.5 88.9 C75.8 84 73.6 78 72.6 71.1 Z" fill="#2a2a33"/><path d="M60.7 103.7 C67 107.5 74 110 81.5 111.1 C73 111.3 65 108.5 60.7 103.7 Z" fill="#2a2a33"/><path d="M96 58 C97.5 62 98.5 66 99 72 C97 67 95.5 62 96 58 Z" fill="#2a2a33"/></g><path d="M76.3 46.3 C76.5 49 77.5 53.5 80 55.6 C83 55.8 92 51.5 99.3 46.7 C102 46.5 104 47 105.2 47.8 C108 49.5 109.5 52 110.4 54.8 C112 58 112.7 61 113 64.4 C113.6 67.5 114 70 114.1 72.6 C112 74 110.5 75.3 108.1 76.3 C106 77.2 104 78 102.2 78.5 C100.5 81.5 99.3 84.5 98.5 87.4 C97.6 89.5 97 91.5 97 93.3 C97.2 96.5 97.8 99.5 98.5 102.2 C99.1 105.5 99.9 108.5 100.7 111.1 C98 112.2 95 112.9 91.9 113.3 C87 114.4 82 114.8 77 114.8 C72 115.3 67 115.3 62.2 114.8 C58.5 114.2 55 113.2 52.2 111.9 C52.8 108 53.8 104.5 54.8 100.7 C56 96.5 57.2 92.5 57.8 88.1 C58.2 83 58 78 57.8 73.3 C57.8 68 58.5 63 59.6 58.5 C60.7 55.5 62.3 53 64.4 51.1 C66.5 49.5 69 48.5 71.1 47.8 C73 47.2 74.8 46.6 76.3 46.3 Z" fill="none" stroke="#2c2b33" stroke-width="0.9" stroke-linejoin="round"/></svg></div>
<div class="cell" style="left:2px;top:904px"><b>28</b></div>
<div class="cell" style="left:180px;top:904px"><b>29</b></div>
<div class="cell" style="left:358px;top:904px"><b>30</b></div>
</div>
<div class="abs" style="left:1915px;top:453px;width:5px;height:491px;background:#aaa6aa"></div>

<!-- top bar -->
<div id="topbar">
  <div class="tbtn" style="left:0"></div>
  <div class="tbtn" style="left:48px"></div>
  <div class="tbtn" style="left:96px"></div>
  <div class="tbtn" style="left:144px"></div>
  <div class="tbtn" style="left:192px"></div>
  
<svg class="abs" style="left:0;top:0" width="1920" height="47" viewBox="0 0 1920 47">
<defs>
<linearGradient id="lgm" x1="0" y1="0" x2="1" y2="1"><stop offset="0" stop-color="#e83ee8"/><stop offset=".6" stop-color="#d060f0"/><stop offset="1" stop-color="#d8c0ff"/></linearGradient>
<linearGradient id="lgb" x1="0" y1="0" x2="0" y2="1"><stop offset="0" stop-color="#4fd0f8"/><stop offset="1" stop-color="#8f96fa"/></linearGradient>
</defs>
<!-- logo -->
<path d="M10 24 L18.5 18 L24 21.5 L16 26 L28.5 37 L26 39.5 Z" fill="url(#lgm)"/>
<path d="M16.5 24.5 L34 26 L33.5 29 L27.5 29.2 L35 38.5 L31 39.5 L21.5 29 Z" fill="#050505"/>
<path d="M32 20.5 L38 25.5 L30.5 33" fill="none" stroke="url(#lgb)" stroke-width="3" stroke-linejoin="miter"/>
<path d="M15 4.6 C23 7 30.5 13 33 19.5 C34.8 23 35 25.8 34 27 C27 25.5 19.5 20 16.5 13.5 C14.8 9.8 14.6 7 15 4.6 Z" fill="#fff" stroke="#000" stroke-width="1.3" stroke-linejoin="round"/>
<path d="M16.5 7.5 C21 13 27 20 33.5 26" fill="none" stroke="#000" stroke-width="1"/>
<!-- back arrow -->
<path d="M73.6 13.9 L63.2 24 L73.6 34.1 M64 24 L82.4 24" fill="none" stroke="#0a0a0a" stroke-width="6.8" stroke-linecap="round" stroke-linejoin="round"/>
<path d="M73.6 13.9 L63.2 24 L73.6 34.1 M64 24 L82.4 24" fill="none" stroke="#c6c4c6" stroke-width="5" stroke-linecap="round" stroke-linejoin="round"/>
<!-- save -->
<path d="M108.3 10.8 L125.5 10.8 L131.7 17 L131.7 33.8 L108.3 33.8 Z" fill="none" stroke="#cfcdcf" stroke-width="2.2" stroke-linejoin="miter"/>
<rect x="112.6" y="11.5" width="10.4" height="6.6" fill="#cfcdcf"/>
<rect x="118.6" y="12.6" width="2.8" height="4.2" fill="#232323"/>
<rect x="112.8" y="26" width="14.6" height="7.2" fill="none" stroke="#cfcdcf" stroke-width="2"/>
<!-- undo -->
<path d="M160.2 14.7 A11 11 0 1 1 158.5 28" fill="none" stroke="#cac8ca" stroke-width="3.5"/>
<path d="M155.3 11 L155.3 20 L164.3 20 Z" fill="#cac8ca"/>
<!-- redo -->
<path d="M223.05 14.7 A11 11 0 1 0 224.75 28" fill="none" stroke="#4b4b4b" stroke-width="3.5"/>
<path d="M227.95 11 L227.95 20 L218.95 20 Z" fill="#4b4b4b"/>
<!-- gear -->
<path d="M1891.66 21.32 L1894.56 21.58 L1894.56 25.02 L1891.66 25.28 L1890.73 27.53 L1892.60 29.77 L1890.17 32.20 L1887.93 30.33 L1885.68 31.26 L1885.42 34.16 L1881.98 34.16 L1881.72 31.26 L1879.47 30.33 L1877.23 32.20 L1874.80 29.77 L1876.67 27.53 L1875.74 25.28 L1872.84 25.02 L1872.84 21.58 L1875.74 21.32 L1876.67 19.07 L1874.80 16.83 L1877.23 14.40 L1879.47 16.27 L1881.72 15.34 L1881.98 12.44 L1885.42 12.44 L1885.68 15.34 L1887.93 16.27 L1890.17 14.40 L1892.60 16.83 L1890.73 19.07 Z" fill="#e0e3e3"/>
<circle cx="1883.7" cy="23.3" r="3" fill="#232323"/>
</svg>

  <div class="tab on" style="left:695px;width:160px">CHARACTERS</div>
  <div class="tab" style="left:855px;width:162px">BACKGROUND</div>
  <div class="tab" style="left:1017px;width:112px">STORY</div>
  <div class="tab" style="left:1130px;width:96px">MAP</div>
</div>
</body>
</html>
